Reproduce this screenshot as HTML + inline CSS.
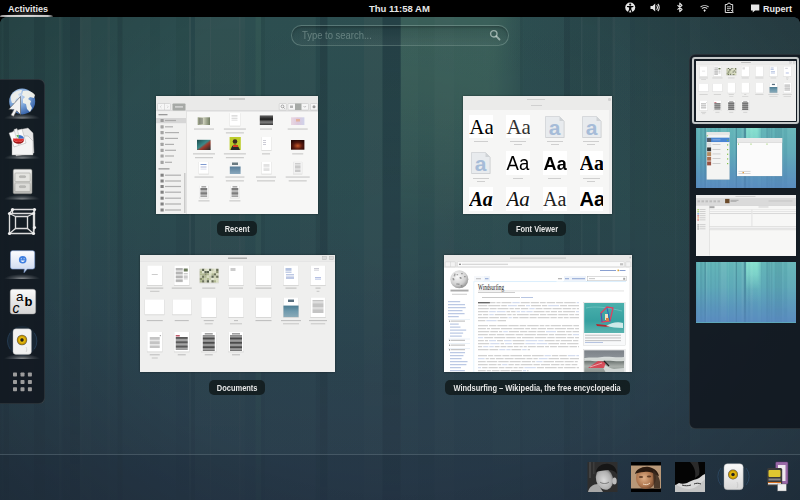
<!DOCTYPE html>
<html><head><meta charset="utf-8">
<style>
*{margin:0;padding:0;box-sizing:border-box}
html,body{width:800px;height:500px;overflow:hidden;background:#000;font-family:"Liberation Sans",sans-serif}
#stage{position:absolute;left:0;top:0;width:800px;height:500px;overflow:hidden}
.abs{position:absolute}
#panel{position:absolute;left:0;top:0;width:800px;height:17px;background:#000;color:#e8e8e8;font-size:9px;font-weight:bold;line-height:10px}
.win{position:absolute;background:#f4f4f3;box-shadow:0 0 2px rgba(0,0,0,.45);overflow:hidden}
.lbl{position:absolute;height:15px;border-radius:5px;background:rgba(16,24,26,.82);color:#e6e6e6;font-size:8.5px;font-weight:bold;text-align:center;line-height:15px;white-space:nowrap}
.lbl{display:flex;justify-content:center}
.lbl span{display:block;margin-top:1px;transform:scaleX(.88);transform-origin:50% 50%}
#dock{position:absolute;left:0;top:79px;width:44.5px;height:325px;background:rgba(17,23,31,.87);border-radius:0 6px 6px 0;box-shadow:inset -1px 0 0 rgba(140,150,150,.18),inset 0 1px 0 rgba(140,150,150,.18),inset 0 -1px 0 rgba(140,150,150,.18)}
#ws{position:absolute;left:688.6px;top:54px;width:120px;height:375px;background:rgba(17,23,31,.88);border-radius:6px 0 0 6px;box-shadow:inset 1px 0 0 rgba(140,150,150,.18),inset 0 1px 0 rgba(140,150,150,.18),inset 0 -1px 0 rgba(140,150,150,.18)}
.wst{position:absolute;left:695.7px;width:100px;height:60.5px;overflow:hidden}
#tray{position:absolute;left:0;top:454px;width:800px;height:46px;background:rgba(15,25,45,.18);border-top:1px solid rgba(120,140,150,.38)}
</style></head><body>
<div id="stage">
<svg width="0" height="0" style="position:absolute">
<defs>
<linearGradient id="wpv" x1="0" y1="0" x2="0" y2="1">
 <stop offset="0" stop-color="#64b6b8"/><stop offset=".4" stop-color="#5eaab8"/><stop offset=".75" stop-color="#5a96bc"/><stop offset="1" stop-color="#5a8cc0"/>
</linearGradient>
<linearGradient id="wpfade" x1="0" y1="0" x2="0" y2="1">
 <stop offset="0" stop-color="#fff"/><stop offset=".5" stop-color="#fff" stop-opacity=".75"/><stop offset="1" stop-color="#fff" stop-opacity=".28"/>
</linearGradient>
<linearGradient id="wpglow" x1="0" y1="0" x2="0" y2="1">
 <stop offset="0" stop-color="#a0ffe0" stop-opacity=".6"/><stop offset=".2" stop-color="#a0ffe0" stop-opacity=".45"/><stop offset=".45" stop-color="#a0ffe0" stop-opacity=".08"/><stop offset=".7" stop-color="#a0ffe0" stop-opacity="0"/>
</linearGradient>
<linearGradient id="wpglowx" x1="0" y1="0" x2="1" y2="0">
 <stop offset="0" stop-color="#fff" stop-opacity=".9"/><stop offset=".7" stop-color="#fff" stop-opacity="1"/><stop offset="1" stop-color="#fff" stop-opacity="0"/>
</linearGradient>
<mask id="wpm" maskContentUnits="userSpaceOnUse"><rect width="800" height="500" fill="url(#wpfade)"/></mask>
<mask id="wpgm" maskContentUnits="userSpaceOnUse"><rect x="400.6" width="125" height="500" fill="url(#wpglowx)"/></mask>
<symbol id="wp" viewBox="0 0 800 500" preserveAspectRatio="none">
 <rect width="800" height="500" fill="url(#wpv)"/>
 <g mask="url(#wpm)"><rect x="0" y="0" width="1.5" height="500" fill="#103050" fill-opacity="0.1"/><rect x="3.5" y="0" width="5.5" height="500" fill="#103050" fill-opacity="0.14"/><rect x="34" y="0" width="11.0" height="500" fill="#103050" fill-opacity="0.14"/><rect x="45" y="0" width="14.0" height="500" fill="#103050" fill-opacity="0.05"/><rect x="59" y="0" width="2.0" height="500" fill="#ffffff" fill-opacity="0.08"/><rect x="62.5" y="0" width="7.5" height="500" fill="#103050" fill-opacity="0.12"/><rect x="70" y="0" width="10.0" height="500" fill="#103050" fill-opacity="0.22"/><rect x="80" y="0" width="2.5" height="500" fill="#ffffff" fill-opacity="0.12"/><rect x="82.5" y="0" width="8.5" height="500" fill="#ffffff" fill-opacity="0.08"/><rect x="107.5" y="0" width="2.5" height="500" fill="#ffffff" fill-opacity="0.08"/><rect x="117.5" y="0" width="5.0" height="500" fill="#103050" fill-opacity="0.16"/><rect x="150" y="0" width="10.0" height="500" fill="#103050" fill-opacity="0.05"/><rect x="176" y="0" width="13.0" height="500" fill="#103050" fill-opacity="0.07"/><rect x="189" y="0" width="2.0" height="500" fill="#ffffff" fill-opacity="0.12"/><rect x="191" y="0" width="4.0" height="500" fill="#103050" fill-opacity="0.13"/><rect x="195" y="0" width="50.0" height="500" fill="#ffffff" fill-opacity="0.07"/><rect x="210" y="0" width="1.0" height="500" fill="#ffffff" fill-opacity="0.1"/><rect x="239" y="0" width="1.5" height="500" fill="#ffffff" fill-opacity="0.1"/><rect x="255.6" y="0" width="5.4" height="500" fill="#a0ffe0" fill-opacity="0.22"/><rect x="261" y="0" width="4.0" height="500" fill="#103050" fill-opacity="0.08"/><rect x="300" y="0" width="15.0" height="500" fill="#ffffff" fill-opacity="0.05"/><rect x="316" y="0" width="4.0" height="500" fill="#103050" fill-opacity="0.12"/><rect x="320" y="0" width="7.5" height="500" fill="#103050" fill-opacity="0.25"/><rect x="364" y="0" width="18.5" height="500" fill="#ffffff" fill-opacity="0.09"/><rect x="382.5" y="0" width="18.1" height="500" fill="#103050" fill-opacity="0.26"/><rect x="400.6" y="0" width="17.4" height="500" fill="#ffffff" fill-opacity="0.03"/><rect x="418" y="0" width="16.5" height="500" fill="#103050" fill-opacity="0.05"/><rect x="434.5" y="0" width="19.5" height="500" fill="#ffffff" fill-opacity="0.08"/><rect x="492.5" y="0" width="27.5" height="500" fill="#a0ffe0" fill-opacity="0.08"/><rect x="520" y="0" width="2.5" height="500" fill="#103050" fill-opacity="0.08"/><rect x="564" y="0" width="6.0" height="500" fill="#103050" fill-opacity="0.2"/><rect x="570" y="0" width="11.0" height="500" fill="#103050" fill-opacity="0.1"/><rect x="581" y="0" width="1.5" height="500" fill="#ffffff" fill-opacity="0.1"/><rect x="582.5" y="0" width="15.0" height="500" fill="#103050" fill-opacity="0.08"/><rect x="597.5" y="0" width="2.5" height="500" fill="#ffffff" fill-opacity="0.12"/><rect x="600" y="0" width="12.5" height="500" fill="#103050" fill-opacity="0.1"/><rect x="612.5" y="0" width="2.5" height="500" fill="#ffffff" fill-opacity="0.1"/><rect x="630" y="0" width="5.0" height="500" fill="#103050" fill-opacity="0.12"/><rect x="635" y="0" width="55.0" height="500" fill="#103050" fill-opacity="0.1"/><rect x="648" y="0" width="1.5" height="500" fill="#ffffff" fill-opacity="0.08"/><rect x="675" y="0" width="1.5" height="500" fill="#ffffff" fill-opacity="0.08"/><rect x="690" y="0" width="10.0" height="500" fill="#ffffff" fill-opacity="0.05"/><rect x="700" y="0" width="30.0" height="500" fill="#103050" fill-opacity="0.06"/><rect x="730" y="0" width="70.0" height="500" fill="#ffffff" fill-opacity="0.04"/></g>
 <rect x="400.6" width="125" height="500" fill="url(#wpglow)" mask="url(#wpgm)"/>
</symbol>
</defs></svg>
<svg class="abs" style="left:0;top:0" width="800" height="500" viewBox="0 0 800 500">
 <defs>
  <radialGradient id="rdesat" cx="800" cy="0" r="300" gradientUnits="userSpaceOnUse" gradientTransform="translate(800 0) scale(1 .9) translate(-800 0)"><stop offset="0" stop-color="#2a3c48" stop-opacity=".55"/><stop offset=".5" stop-color="#2a3c48" stop-opacity=".3"/><stop offset="1" stop-color="#2a3c48" stop-opacity="0"/></radialGradient>
  <linearGradient id="btint" x1="0" y1="0" x2="0" y2="1"><stop offset="0" stop-color="#3c3c1e" stop-opacity="0"/><stop offset=".5" stop-color="#3c3c1e" stop-opacity=".05"/><stop offset="1" stop-color="#3c3c1e" stop-opacity=".12"/></linearGradient>
  <radialGradient id="vig" cx="400" cy="230" r="520" gradientUnits="userSpaceOnUse" gradientTransform="translate(400 230) scale(1 .8) translate(-400 -230)">
   <stop offset="0" stop-color="#000" stop-opacity="0"/><stop offset=".6" stop-color="#000" stop-opacity=".04"/><stop offset="1" stop-color="#000" stop-opacity=".22"/>
  </radialGradient>
 </defs>
 <use href="#wp" x="0" y="0" width="800" height="500"/>
 <rect width="800" height="500" fill="#000" fill-opacity=".545"/>
 <rect width="800" height="500" fill="#505050" fill-opacity=".05"/>
 <rect x="0" width="800" height="500" fill="url(#rdesat)"/>
 <rect width="800" height="500" fill="url(#btint)"/>
 <rect width="800" height="500" fill="url(#vig)"/>
</svg>

<div id="panel">
 <div class="abs" style="left:8px;top:4px">Activities</div>
 <div class="abs" style="left:0;top:15.2px;width:53px;height:1.8px;background:linear-gradient(90deg,rgba(200,200,200,.7),#c8c8c8 15%,#d0d0d0 50%,#c0c0c0 90%,rgba(200,200,200,.3));border-radius:2px 2px 0 0"></div>
 <div class="abs" style="left:5px;top:10px;width:46px;height:6px;background:radial-gradient(ellipse at 50% 100%,rgba(255,255,255,.25),rgba(255,255,255,0) 70%)"></div>
 <div class="abs" style="left:369px;top:4px;font-size:9.5px">Thu 11:58 AM</div>
 <div class="abs" style="left:763px;top:4px">Rupert</div>
 <svg class="abs" style="left:0;top:0" width="800" height="17" viewBox="0 0 800 17">
<circle cx="630.2" cy="7.5" r="5" fill="#e6e6e6"/>
<g fill="#000"><circle cx="630.2" cy="4.6" r="1.05"/><path d="M627 6h6.4v1.1l-2.1.5v1.6l1.3 3h-1.2l-1.2-2.5-1.2 2.5h-1.2l1.3-3v-1.6l-2.1-.5z"/></g>
<path d="M650.5 6h2l2.7-2.5v8l-2.7-2.5h-2z" fill="#e6e6e6"/>
<path d="M656.5 5.3a3 3 0 0 1 0 4.4M657.8 4a5 5 0 0 1 0 7" fill="none" stroke="#e6e6e6" stroke-width="1.1"/>
<path d="M677.5 5.2l4.5 4.3-2.2 2.2v-8.6l2.2 2.2-4.5 4.3" fill="none" stroke="#e6e6e6" stroke-width="1.1" stroke-linejoin="round"/>
<path d="M700.6 7a6 6 0 0 1 8 0" fill="none" stroke="#c8c8c8" stroke-width="1.1"/>
<path d="M702 8.6a4 4 0 0 1 5.2 0" fill="none" stroke="#d8d8d8" stroke-width="1.1"/>
<path d="M703.4 10.2l1.2-0.9 1.2.9-1.2 1.8z" fill="#e6e6e6"/>
<path d="M725.3 4.5h2l.7-1.3h2l.7 1.3h2v8h-7.4z" fill="none" stroke="#e0e0e0" stroke-width="1"/>
<path d="M727 6.8h4M727 8.6h4M727 10.4h2.5" stroke="#e0e0e0" stroke-width=".8"/>
<path d="M731 10l2.5 2.5" stroke="#bbb" stroke-width="1"/>
<path d="M751 4.5h8.3v6h-4.2l-2.4 2.1v-2.1h-1.7z" fill="#e6e6e6"/>
</svg>

</div>
<!-- screen corners -->
<div class="abs" style="left:0;top:17px;width:6px;height:6px;background:radial-gradient(circle at 6px 6px,transparent 5.5px,#000 6px)"></div>
<div class="abs" style="left:794px;top:17px;width:6px;height:6px;background:radial-gradient(circle at 0 6px,transparent 5.5px,#000 6px)"></div>

<!-- search -->
<div class="abs" style="left:291px;top:25px;width:218px;height:21px;border-radius:11px;border:1.5px solid rgba(175,205,195,.30);background:linear-gradient(180deg,rgba(0,0,0,.08),rgba(255,255,255,.04));box-shadow:inset 0 1.5px 2px rgba(0,0,0,.2);color:rgba(200,222,214,.36);font-size:10.5px;line-height:19px;padding-left:10px"><span style="display:inline-block;transform:scaleX(.9);transform-origin:0 50%">Type to search...</span></div>
<svg class="abs" style="left:489px;top:29px" width="12" height="12" viewBox="0 0 12 12"><circle cx="4.8" cy="4.8" r="3.2" fill="none" stroke="rgba(215,228,222,.6)" stroke-width="1.4"/><path d="M7.2 7.2L10.5 10.5" stroke="rgba(215,228,222,.6)" stroke-width="1.8" stroke-linecap="round"/></svg>

<!-- windows -->
<div class="win" id="w1" style="left:156px;top:96px;width:162px;height:118px"><svg class="abs" style="left:0;top:0" width="162" height="118" viewBox="156 96 162 118"><defs><linearGradient id="g1a" x1="0" x2="1"><stop offset="0" stop-color="#8f977c"/><stop offset=".45" stop-color="#cfd2bd"/><stop offset="1" stop-color="#6f7a60"/></linearGradient>
<linearGradient id="g1b" x1="0" x2="0" y1="0" y2="1"><stop offset="0" stop-color="#666"/><stop offset=".4" stop-color="#1e1e1e"/><stop offset=".7" stop-color="#808080"/><stop offset="1" stop-color="#3a3a3a"/></linearGradient>
<linearGradient id="g1c" x1="0" x2="1"><stop offset="0" stop-color="#ead8e2"/><stop offset=".5" stop-color="#dcc8dc"/><stop offset="1" stop-color="#cfd3ea"/></linearGradient>
<linearGradient id="g1d" x1="0" x2="1" y1="0" y2="1"><stop offset="0" stop-color="#1d4a4a"/><stop offset=".45" stop-color="#3b8a8a"/><stop offset=".6" stop-color="#a03a2a"/><stop offset="1" stop-color="#1a2a2a"/></linearGradient>
<radialGradient id="g1e" cx=".5" cy=".6" r=".6"><stop offset="0" stop-color="#c8582a"/><stop offset=".55" stop-color="#5a1a10"/><stop offset="1" stop-color="#2a0a08"/></radialGradient>
<linearGradient id="g1f" x1="0" x2="0" y1="0" y2="1"><stop offset="0" stop-color="#f4f4f4"/><stop offset=".35" stop-color="#f4f4f4"/><stop offset=".4" stop-color="#5a7f9a"/><stop offset="1" stop-color="#8aa8bd"/></linearGradient></defs><rect x="156.00" y="96.00" width="162.00" height="118.00" fill="#f7f7f6"/><rect x="156.00" y="96.00" width="162.00" height="15.00" fill="#eaeae9"/><rect x="156.00" y="110.60" width="162.00" height="0.70" fill="#c8c8c7"/><rect x="229.00" y="98.40" width="16.00" height="1.20" fill="#b8b8b8"/><rect x="157.50" y="103.50" width="13.00" height="6.50" fill="#f6f6f6" stroke="#c0c0c0" stroke-width="0.5" rx="0.8"/><rect x="164.00" y="103.50" width="0.50" height="6.50" fill="#c4c4c4"/><path d="M161.5 105.5l-1.3 1.3 1.3 1.3M167 105.5l1.3 1.3-1.3 1.3" fill="none" stroke="#bbb" stroke-width=".5"/><rect x="172.50" y="103.50" width="13.00" height="7.00" fill="#a6a9a6" rx="0.8"/><rect x="175.00" y="106.30" width="8.00" height="1.20" fill="#e2e2e2"/><rect x="279.20" y="103.50" width="7.20" height="6.50" fill="#f6f6f6" stroke="#c0c0c0" stroke-width="0.5" rx="0.8"/><circle cx="282.5" cy="106.4" r="1.4" fill="none" stroke="#777" stroke-width=".6"/><path d="M283.5 107.4l1.2 1.2" stroke="#777" stroke-width=".7"/><rect x="288.00" y="103.50" width="20.50" height="6.50" fill="#f6f6f6" stroke="#c0c0c0" stroke-width="0.5" rx="0.8"/><rect x="295.00" y="103.50" width="6.50" height="6.50" fill="#a6a9a6"/><rect x="290.00" y="105.50" width="3.00" height="2.50" fill="#999" fill-opacity="0.7"/><path d="M303.5 106l1.3 1.3 1.3-1.3" fill="none" stroke="#888" stroke-width=".5"/><rect x="310.40" y="103.50" width="7.20" height="6.50" fill="#f6f6f6" stroke="#c0c0c0" stroke-width="0.5" rx="0.8"/><circle cx="314" cy="106.7" r="1.5" fill="#999"/><rect x="156.00" y="111.30" width="30.00" height="102.70" fill="#f1f1f0"/><rect x="186.00" y="111.30" width="0.60" height="102.70" fill="#d6d6d6"/><rect x="184.20" y="173.00" width="1.20" height="40.00" fill="#c0c0c0"/><rect x="158.50" y="114.00" width="9.00" height="1.30" fill="#9a9a9a"/><rect x="156.00" y="118.00" width="30.00" height="5.20" fill="#d6d6d6"/><rect x="160.50" y="118.90" width="3.20" height="3.20" fill="#8a8a8a" fill-opacity="0.75" rx="0.4"/><rect x="165.00" y="119.90" width="11.00" height="1.20" fill="#a0a0a0" fill-opacity="0.8"/><rect x="160.50" y="125.20" width="3.20" height="3.20" fill="#8a8a8a" fill-opacity="0.75" rx="0.4"/><rect x="165.00" y="126.20" width="8.00" height="1.20" fill="#a0a0a0" fill-opacity="0.8"/><rect x="160.50" y="131.00" width="3.20" height="3.20" fill="#8a8a8a" fill-opacity="0.75" rx="0.4"/><rect x="165.00" y="132.00" width="14.00" height="1.20" fill="#a0a0a0" fill-opacity="0.8"/><rect x="160.50" y="136.80" width="3.20" height="3.20" fill="#8a8a8a" fill-opacity="0.75" rx="0.4"/><rect x="165.00" y="137.80" width="13.00" height="1.20" fill="#a0a0a0" fill-opacity="0.8"/><rect x="160.50" y="142.80" width="3.20" height="3.20" fill="#8a8a8a" fill-opacity="0.75" rx="0.4"/><rect x="165.00" y="143.80" width="9.00" height="1.20" fill="#a0a0a0" fill-opacity="0.8"/><rect x="160.50" y="148.70" width="3.20" height="3.20" fill="#8a8a8a" fill-opacity="0.75" rx="0.4"/><rect x="165.00" y="149.70" width="11.00" height="1.20" fill="#a0a0a0" fill-opacity="0.8"/><rect x="160.50" y="154.40" width="3.20" height="3.20" fill="#8a8a8a" fill-opacity="0.75" rx="0.4"/><rect x="165.00" y="155.40" width="9.00" height="1.20" fill="#a0a0a0" fill-opacity="0.8"/><rect x="160.50" y="160.70" width="3.20" height="3.20" fill="#8a8a8a" fill-opacity="0.75" rx="0.4"/><rect x="165.00" y="161.70" width="7.00" height="1.20" fill="#a0a0a0" fill-opacity="0.8"/><rect x="158.50" y="168.20" width="11.00" height="1.30" fill="#9a9a9a"/><rect x="160.50" y="173.70" width="3.20" height="3.00" fill="#666" fill-opacity="0.8"/><rect x="165.00" y="174.60" width="16.00" height="1.20" fill="#a0a0a0" fill-opacity="0.8"/><rect x="160.50" y="179.50" width="3.20" height="3.00" fill="#666" fill-opacity="0.8"/><rect x="165.00" y="180.40" width="16.00" height="1.20" fill="#a0a0a0" fill-opacity="0.8"/><rect x="160.50" y="185.00" width="3.20" height="3.00" fill="#666" fill-opacity="0.8"/><rect x="165.00" y="185.90" width="16.00" height="1.20" fill="#a0a0a0" fill-opacity="0.8"/><rect x="160.50" y="190.70" width="3.20" height="3.00" fill="#666" fill-opacity="0.8"/><rect x="165.00" y="191.60" width="16.00" height="1.20" fill="#a0a0a0" fill-opacity="0.8"/><rect x="160.50" y="196.70" width="3.20" height="3.00" fill="#666" fill-opacity="0.8"/><rect x="165.00" y="197.60" width="16.00" height="1.20" fill="#a0a0a0" fill-opacity="0.8"/><rect x="160.50" y="202.50" width="3.20" height="3.00" fill="#666" fill-opacity="0.8"/><rect x="165.00" y="203.40" width="16.00" height="1.20" fill="#a0a0a0" fill-opacity="0.8"/><rect x="160.50" y="208.50" width="3.20" height="3.00" fill="#666" fill-opacity="0.8"/><rect x="165.00" y="209.40" width="16.00" height="1.20" fill="#a0a0a0" fill-opacity="0.8"/><rect x="197.70" y="117.30" width="12.30" height="7.70" fill="url(#g1a)"/><rect x="199.00" y="118.00" width="4.00" height="6.00" fill="#555" fill-opacity="0.35"/><rect x="229.70" y="113.20" width="10.60" height="13.30" fill="#000" fill-opacity="0.12"/><rect x="230.00" y="113.00" width="10.00" height="12.70" fill="#fff"/><rect x="231.50" y="115.00" width="6.00" height="0.60" fill="#c8c8c8"/><rect x="231.50" y="116.60" width="6.00" height="0.60" fill="#c8c8c8"/><rect x="231.50" y="118.20" width="6.00" height="0.60" fill="#c8c8c8"/><rect x="231.50" y="119.80" width="6.00" height="0.60" fill="#c8c8c8"/><rect x="259.80" y="115.40" width="13.20" height="9.60" fill="url(#g1b)"/><rect x="291.00" y="117.30" width="13.40" height="7.70" fill="url(#g1c)"/><rect x="296.00" y="119.00" width="4.00" height="2.50" fill="#e8a070" fill-opacity="0.6"/><rect x="197.00" y="139.80" width="13.60" height="10.20" fill="url(#g1d)"/><rect x="229.60" y="137.00" width="11.20" height="13.00" fill="#bccc2c"/><circle cx="235" cy="141.5" r="2.3" fill="#3a2a20"/><path d="M230.5 150c1-4 3-5.5 4.5-5.5s3.5 1.5 5 5.5z" fill="#2a2a2a"/><rect x="233" y="145" width="5" height="2" fill="#d84020"/><rect x="261.40" y="137.20" width="10.20" height="13.60" fill="#000" fill-opacity="0.12"/><rect x="261.70" y="137.00" width="9.60" height="13.00" fill="#fff"/><rect x="263.00" y="140.00" width="3.00" height="0.60" fill="#aab"/><rect x="263.00" y="142.00" width="3.00" height="0.60" fill="#aab"/><rect x="263.00" y="144.00" width="3.00" height="0.60" fill="#aab"/><rect x="291.00" y="140.00" width="13.40" height="9.70" fill="url(#g1e)"/><rect x="198.70" y="161.90" width="10.10" height="12.60" fill="#000" fill-opacity="0.12"/><rect x="199.00" y="161.70" width="9.50" height="12.00" fill="#fff"/><rect x="200.50" y="164.00" width="6.00" height="1.00" fill="#7f9ad0"/><rect x="200.50" y="166.00" width="6.00" height="0.50" fill="#b0b8d8"/><rect x="200.50" y="167.40" width="6.00" height="0.50" fill="#b0b8d8"/><rect x="200.50" y="168.80" width="6.00" height="0.50" fill="#b0b8d8"/><rect x="229.8" y="162" width="10.8" height="12" fill="url(#g1f)"/><rect x="232.00" y="162.50" width="6.00" height="2.50" fill="#6a7a80"/><rect x="261.40" y="161.90" width="10.20" height="12.60" fill="#000" fill-opacity="0.12"/><rect x="261.70" y="161.70" width="9.60" height="12.00" fill="#fff"/><rect x="263.50" y="164.00" width="6.00" height="0.50" fill="#c4c4c4"/><rect x="263.50" y="165.30" width="6.00" height="0.50" fill="#c4c4c4"/><rect x="263.50" y="166.60" width="6.00" height="0.50" fill="#c4c4c4"/><rect x="263.50" y="167.90" width="6.00" height="0.50" fill="#c4c4c4"/><rect x="263.50" y="169.20" width="6.00" height="0.50" fill="#c4c4c4"/><rect x="263.50" y="170.50" width="6.00" height="0.50" fill="#c4c4c4"/><rect x="293.10" y="161.90" width="9.20" height="12.60" fill="#000" fill-opacity="0.12"/><rect x="293.40" y="161.70" width="8.60" height="12.00" fill="#f2f2f2"/><rect x="295.00" y="163.50" width="5.50" height="0.55" fill="#a8a8a8"/><rect x="295.00" y="164.80" width="5.50" height="0.55" fill="#a8a8a8"/><rect x="295.00" y="166.10" width="5.50" height="0.55" fill="#a8a8a8"/><rect x="295.00" y="167.40" width="5.50" height="0.55" fill="#a8a8a8"/><rect x="295.00" y="168.70" width="5.50" height="0.55" fill="#a8a8a8"/><rect x="295.00" y="170.00" width="5.50" height="0.55" fill="#a8a8a8"/><rect x="295.00" y="171.30" width="5.50" height="0.55" fill="#a8a8a8"/><rect x="199.10" y="185.80" width="9.40" height="12.60" fill="#000" fill-opacity="0.12"/><rect x="199.40" y="185.60" width="8.80" height="12.00" fill="#fff"/><rect x="201.40" y="186.50" width="4.80" height="0.80" fill="#555"/><rect x="200.40" y="188.00" width="6.80" height="0.70" fill="#444"/><rect x="200.40" y="189.30" width="6.80" height="0.70" fill="#444"/><rect x="200.40" y="190.60" width="6.80" height="0.70" fill="#444"/><rect x="200.40" y="191.90" width="6.80" height="0.70" fill="#444"/><rect x="200.40" y="193.20" width="6.80" height="0.70" fill="#444"/><rect x="200.40" y="194.50" width="6.80" height="0.70" fill="#444"/><rect x="200.40" y="195.80" width="6.80" height="0.70" fill="#444"/><rect x="230.20" y="185.80" width="9.40" height="12.60" fill="#000" fill-opacity="0.12"/><rect x="230.50" y="185.60" width="8.80" height="12.00" fill="#fff"/><rect x="232.50" y="186.50" width="4.80" height="0.80" fill="#555"/><rect x="231.50" y="188.00" width="6.80" height="0.70" fill="#444"/><rect x="231.50" y="189.30" width="6.80" height="0.70" fill="#444"/><rect x="231.50" y="190.60" width="6.80" height="0.70" fill="#444"/><rect x="231.50" y="191.90" width="6.80" height="0.70" fill="#444"/><rect x="231.50" y="193.20" width="6.80" height="0.70" fill="#444"/><rect x="231.50" y="194.50" width="6.80" height="0.70" fill="#444"/><rect x="231.50" y="195.80" width="6.80" height="0.70" fill="#444"/><rect x="194.00" y="128.50" width="20.00" height="1.10" fill="#9a9a9a" fill-opacity="0.5"/><rect x="223.90" y="128.50" width="22.00" height="1.10" fill="#9a9a9a" fill-opacity="0.5"/><rect x="225.90" y="132.30" width="18.00" height="1.10" fill="#9a9a9a" fill-opacity="0.5"/><rect x="260.00" y="128.50" width="12.00" height="1.10" fill="#9a9a9a" fill-opacity="0.5"/><rect x="287.70" y="128.50" width="20.00" height="1.10" fill="#9a9a9a" fill-opacity="0.5"/><rect x="193.00" y="153.30" width="22.00" height="1.10" fill="#9a9a9a" fill-opacity="0.5"/><rect x="195.00" y="157.10" width="18.00" height="1.10" fill="#9a9a9a" fill-opacity="0.5"/><rect x="223.90" y="153.30" width="22.00" height="1.10" fill="#9a9a9a" fill-opacity="0.5"/><rect x="225.90" y="157.10" width="18.00" height="1.10" fill="#9a9a9a" fill-opacity="0.5"/><rect x="262.00" y="153.30" width="8.00" height="1.10" fill="#9a9a9a" fill-opacity="0.5"/><rect x="292.20" y="153.30" width="11.00" height="1.10" fill="#9a9a9a" fill-opacity="0.5"/><rect x="194.50" y="176.50" width="19.00" height="1.10" fill="#9a9a9a" fill-opacity="0.5"/><rect x="225.40" y="176.50" width="19.00" height="1.10" fill="#9a9a9a" fill-opacity="0.5"/><rect x="225.90" y="180.30" width="18.00" height="1.10" fill="#9a9a9a" fill-opacity="0.5"/><rect x="256.00" y="176.50" width="20.00" height="1.10" fill="#9a9a9a" fill-opacity="0.5"/><rect x="257.00" y="180.30" width="18.00" height="1.10" fill="#9a9a9a" fill-opacity="0.5"/><rect x="285.70" y="176.50" width="24.00" height="1.10" fill="#9a9a9a" fill-opacity="0.5"/><rect x="288.70" y="180.30" width="18.00" height="1.10" fill="#9a9a9a" fill-opacity="0.5"/><rect x="198.50" y="200.30" width="11.00" height="1.10" fill="#9a9a9a" fill-opacity="0.5"/><rect x="229.40" y="200.30" width="11.00" height="1.10" fill="#9a9a9a" fill-opacity="0.5"/></svg></div>
<div class="lbl" style="left:217px;top:221px;width:40px"><span>Recent</span></div>
<div class="win" id="w2" style="left:463px;top:96px;width:149px;height:118px"><div class="abs" style="left:0.0px;top:0.0px;width:149.0px;height:13.5px;background:#ebebea;"></div><div class="abs" style="left:0.0px;top:13.5px;width:149.0px;height:0.7px;background:#d2d2d2;"></div><div class="abs" style="left:64.0px;top:2.5px;width:18.0px;height:1.0px;background:#d0d0d0;"></div><div class="abs" style="left:68.0px;top:8.5px;width:11.0px;height:1.0px;background:#d0d0d0;"></div><div class="abs" style="left:145.0px;top:2.0px;width:2.5px;height:2.5px;background:#d0d0d0;border-radius:50%"></div><div class="abs" style="left:0.0px;top:14.0px;width:149.0px;height:108.0px;background:#f6f6f5;"></div><div class="abs" style="left:146.3px;top:14.0px;width:2.7px;height:104.0px;background:#ececec;"></div><div class="abs" style="left:6.3px;top:18.5px;width:23.5px;height:23.5px;background:#fff;overflow:hidden;text-align:center;white-space:nowrap;font-family:'Liberation Serif';font-weight:normal;font-style:normal;font-size:21px;line-height:25px;color:#000"><span style="display:inline-block;transform:scaleX(1)">Aa</span></div><div class="abs" style="left:43.4px;top:18.5px;width:23.5px;height:23.5px;background:#fff;overflow:hidden;text-align:center;white-space:nowrap;font-family:'Liberation Serif';font-weight:normal;font-style:normal;font-size:21px;line-height:25px;color:#333"><span style="display:inline-block;transform:scaleX(1)">Aa</span></div><svg class="abs" style="left:80.0px;top:17.5px" width="24" height="25" viewBox="0 0 24 25"><path d="M2.5 2.5h14l4.5 4.5v16.5h-18.5z" fill="#000" fill-opacity=".12" transform="translate(.4 .6)"/><path d="M2.5 2.5h14l4.5 4.5v16.5h-18.5z" fill="#e8ebee" stroke="#c6cace" stroke-width=".6"/><path d="M16.5 2.5v4.5h4.5" fill="#cfd3d6"/><text x="11.5" y="20.5" text-anchor="middle" font-family="Liberation Sans" font-size="21" fill="#a6bcd8" font-weight="bold">a</text></svg><svg class="abs" style="left:116.6px;top:17.5px" width="24" height="25" viewBox="0 0 24 25"><path d="M2.5 2.5h14l4.5 4.5v16.5h-18.5z" fill="#000" fill-opacity=".12" transform="translate(.4 .6)"/><path d="M2.5 2.5h14l4.5 4.5v16.5h-18.5z" fill="#e8ebee" stroke="#c6cace" stroke-width=".6"/><path d="M16.5 2.5v4.5h4.5" fill="#cfd3d6"/><text x="11.5" y="20.5" text-anchor="middle" font-family="Liberation Sans" font-size="21" fill="#a6bcd8" font-weight="bold">a</text></svg><svg class="abs" style="left:6.3px;top:54.2px" width="24" height="25" viewBox="0 0 24 25"><path d="M2.5 2.5h14l4.5 4.5v16.5h-18.5z" fill="#000" fill-opacity=".12" transform="translate(.4 .6)"/><path d="M2.5 2.5h14l4.5 4.5v16.5h-18.5z" fill="#e8ebee" stroke="#c6cace" stroke-width=".6"/><path d="M16.5 2.5v4.5h4.5" fill="#cfd3d6"/><text x="11.5" y="20.5" text-anchor="middle" font-family="Liberation Sans" font-size="21" fill="#a6bcd8" font-weight="bold">a</text></svg><div class="abs" style="left:43.4px;top:55.2px;width:23.5px;height:23.5px;background:#fff;overflow:hidden;text-align:center;white-space:nowrap;font-family:'Liberation Sans';font-weight:normal;font-style:normal;font-size:19.5px;line-height:25px;color:#000"><span style="display:inline-block;transform:scaleX(0.95)">Aa</span></div><div class="abs" style="left:80.0px;top:55.2px;width:23.5px;height:23.5px;background:#fff;overflow:hidden;text-align:center;white-space:nowrap;font-family:'Liberation Sans';font-weight:bold;font-style:normal;font-size:19px;line-height:25px;color:#000"><span style="display:inline-block;transform:scaleX(0.95)">Aa</span></div><div class="abs" style="left:116.6px;top:55.2px;width:23.5px;height:23.5px;background:#fff;overflow:hidden;text-align:center;white-space:nowrap;font-family:'Liberation Serif';font-weight:bold;font-style:normal;font-size:20px;line-height:24px;color:#000"><span style="display:inline-block;transform:scaleX(1)">Aa</span></div><div class="abs" style="left:6.3px;top:91.2px;width:23.5px;height:23.5px;background:#fff;overflow:hidden;text-align:center;white-space:nowrap;font-family:'Liberation Serif';font-weight:bold;font-style:italic;font-size:20px;line-height:25px;color:#000"><span style="display:inline-block;transform:scaleX(1)">Aa</span></div><div class="abs" style="left:43.4px;top:91.2px;width:23.5px;height:23.5px;background:#fff;overflow:hidden;text-align:center;white-space:nowrap;font-family:'Liberation Serif';font-weight:normal;font-style:italic;font-size:21px;line-height:25px;color:#111"><span style="display:inline-block;transform:scaleX(1)">Aa</span></div><div class="abs" style="left:80.0px;top:91.2px;width:23.5px;height:23.5px;background:#fff;overflow:hidden;text-align:center;white-space:nowrap;font-family:'Liberation Serif';font-weight:normal;font-style:normal;font-size:20px;line-height:25px;color:#222"><span style="display:inline-block;transform:scaleX(1)">Aa</span></div><div class="abs" style="left:116.6px;top:91.2px;width:23.5px;height:23.5px;background:#fff;overflow:hidden;text-align:center;white-space:nowrap;font-family:'Liberation Sans';font-weight:bold;font-style:normal;font-size:20px;line-height:25px;color:#000"><span style="display:inline-block;transform:scaleX(1)">Aa</span></div><div class="abs" style="left:11.1px;top:45.0px;width:14.0px;height:1.0px;background:#cfcfcf;"></div><div class="abs" style="left:47.1px;top:45.0px;width:16.0px;height:1.0px;background:#cfcfcf;"></div><div class="abs" style="left:51.1px;top:48.2px;width:8.0px;height:1.0px;background:#cfcfcf;"></div><div class="abs" style="left:83.8px;top:45.0px;width:16.0px;height:1.0px;background:#cfcfcf;"></div><div class="abs" style="left:87.8px;top:48.2px;width:8.0px;height:1.0px;background:#cfcfcf;"></div><div class="abs" style="left:120.4px;top:45.0px;width:16.0px;height:1.0px;background:#cfcfcf;"></div><div class="abs" style="left:124.4px;top:48.2px;width:8.0px;height:1.0px;background:#cfcfcf;"></div><div class="abs" style="left:10.1px;top:81.7px;width:16.0px;height:1.0px;background:#cfcfcf;"></div><div class="abs" style="left:14.1px;top:84.9px;width:8.0px;height:1.0px;background:#cfcfcf;"></div><div class="abs" style="left:50.1px;top:81.7px;width:10.0px;height:1.0px;background:#cfcfcf;"></div><div class="abs" style="left:85.2px;top:81.7px;width:13.0px;height:1.0px;background:#cfcfcf;"></div><div class="abs" style="left:119.9px;top:81.7px;width:17.0px;height:1.0px;background:#cfcfcf;"></div><div class="abs" style="left:124.4px;top:84.9px;width:8.0px;height:1.0px;background:#cfcfcf;"></div></div>
<div class="lbl" style="left:508px;top:221px;width:58px"><span>Font Viewer</span></div>
<div class="win" id="w3" style="left:140px;top:255px;width:195px;height:117px"><svg class="abs" style="left:0;top:0" width="195" height="118" viewBox="140 255 195 118"><defs><linearGradient id="g3a" x1="0" x2="0" y1="0" y2="1"><stop offset="0" stop-color="#fff"/><stop offset=".38" stop-color="#fff"/><stop offset=".45" stop-color="#4f7f95"/><stop offset=".7" stop-color="#6f9aad"/><stop offset="1" stop-color="#8aaab8"/></linearGradient></defs><rect x="140.00" y="255.00" width="195.00" height="118.00" fill="#efefee"/><rect x="140.00" y="255.00" width="195.00" height="6.30" fill="#ebebea"/><rect x="140.00" y="261.30" width="195.00" height="0.50" fill="#dcdcdc"/><rect x="228.00" y="257.60" width="19.00" height="1.20" fill="#666" fill-opacity="0.55"/><rect x="322.50" y="256.30" width="4.00" height="3.50" fill="#dadada" stroke="#b5b5b5" stroke-width="0.4"/><rect x="329.50" y="256.30" width="4.00" height="3.50" fill="#dadada" stroke="#b5b5b5" stroke-width="0.4"/><rect x="146.95" y="265.70" width="15.60" height="20.10" fill="#000" fill-opacity="0.12"/><rect x="147.25" y="265.50" width="15.00" height="19.50" fill="#fff"/><rect x="151.75" y="274.30" width="6.00" height="0.60" fill="#aaa"/><rect x="173.95" y="265.70" width="15.60" height="20.10" fill="#000" fill-opacity="0.12"/><rect x="174.25" y="265.50" width="15.00" height="19.50" fill="#fff"/><rect x="175.75" y="268.00" width="7.00" height="0.55" fill="#777"/><rect x="175.75" y="269.35" width="7.00" height="0.55" fill="#777"/><rect x="175.75" y="270.70" width="7.00" height="0.55" fill="#777"/><rect x="175.75" y="272.05" width="7.00" height="0.55" fill="#777"/><rect x="175.75" y="273.40" width="7.00" height="0.55" fill="#777"/><rect x="175.75" y="274.75" width="7.00" height="0.55" fill="#777"/><rect x="175.75" y="276.10" width="7.00" height="0.55" fill="#777"/><rect x="175.75" y="277.45" width="7.00" height="0.55" fill="#777"/><rect x="175.75" y="278.80" width="7.00" height="0.55" fill="#777"/><rect x="175.75" y="280.15" width="7.00" height="0.55" fill="#777"/><rect x="175.75" y="281.50" width="7.00" height="0.55" fill="#777"/><rect x="183.75" y="268.50" width="4.00" height="3.00" fill="#6a7a5a"/><rect x="183.75" y="273.50" width="4.00" height="0.50" fill="#999"/><rect x="183.75" y="274.80" width="4.00" height="0.50" fill="#999"/><rect x="183.75" y="276.10" width="4.00" height="0.50" fill="#999"/><rect x="183.75" y="277.40" width="4.00" height="0.50" fill="#999"/><rect x="183.75" y="278.70" width="4.00" height="0.50" fill="#999"/><rect x="199.45" y="268.95" width="19.35" height="14.35" fill="#000" fill-opacity="0.12"/><rect x="199.75" y="268.75" width="18.75" height="13.75" fill="#f0f0e4"/><rect x="199.75" y="268.75" width="2.34" height="2.29" fill="#c8ccb0"/><rect x="199.75" y="271.04" width="2.34" height="2.29" fill="#b0b890"/><rect x="199.75" y="273.33" width="2.34" height="2.29" fill="#b0b890"/><rect x="199.75" y="275.62" width="2.34" height="2.29" fill="#c8ccb0"/><rect x="199.75" y="277.91" width="2.34" height="2.29" fill="#8a9070"/><rect x="199.75" y="280.20" width="2.34" height="2.29" fill="#b0b890"/><rect x="202.09" y="268.75" width="2.34" height="2.29" fill="#5a6250"/><rect x="202.09" y="271.04" width="2.34" height="2.29" fill="#e0e4d0"/><rect x="202.09" y="273.33" width="2.34" height="2.29" fill="#b0b890"/><rect x="202.09" y="275.62" width="2.34" height="2.29" fill="#6a7058"/><rect x="202.09" y="277.91" width="2.34" height="2.29" fill="#b0b890"/><rect x="202.09" y="280.20" width="2.34" height="2.29" fill="#6a7058"/><rect x="204.43" y="268.75" width="2.34" height="2.29" fill="#d8dcc0"/><rect x="204.43" y="271.04" width="2.34" height="2.29" fill="#5a6250"/><rect x="204.43" y="273.33" width="2.34" height="2.29" fill="#8a9070"/><rect x="204.43" y="275.62" width="2.34" height="2.29" fill="#b0b890"/><rect x="204.43" y="277.91" width="2.34" height="2.29" fill="#c8ccb0"/><rect x="204.43" y="280.20" width="2.34" height="2.29" fill="#c8ccb0"/><rect x="206.77" y="268.75" width="2.34" height="2.29" fill="#e0e4d0"/><rect x="206.77" y="271.04" width="2.34" height="2.29" fill="#5a6250"/><rect x="206.77" y="273.33" width="2.34" height="2.29" fill="#b0b890"/><rect x="206.77" y="275.62" width="2.34" height="2.29" fill="#d8dcc0"/><rect x="206.77" y="277.91" width="2.34" height="2.29" fill="#b0b890"/><rect x="206.77" y="280.20" width="2.34" height="2.29" fill="#5a6250"/><rect x="209.11" y="268.75" width="2.34" height="2.29" fill="#5a6250"/><rect x="209.11" y="271.04" width="2.34" height="2.29" fill="#e0e4d0"/><rect x="209.11" y="273.33" width="2.34" height="2.29" fill="#d8dcc0"/><rect x="209.11" y="275.62" width="2.34" height="2.29" fill="#c8ccb0"/><rect x="209.11" y="277.91" width="2.34" height="2.29" fill="#c8ccb0"/><rect x="209.11" y="280.20" width="2.34" height="2.29" fill="#e0e4d0"/><rect x="211.45" y="268.75" width="2.34" height="2.29" fill="#c8ccb0"/><rect x="211.45" y="271.04" width="2.34" height="2.29" fill="#d8dcc0"/><rect x="211.45" y="273.33" width="2.34" height="2.29" fill="#b0b890"/><rect x="211.45" y="275.62" width="2.34" height="2.29" fill="#5a6250"/><rect x="211.45" y="277.91" width="2.34" height="2.29" fill="#e0e4d0"/><rect x="211.45" y="280.20" width="2.34" height="2.29" fill="#6a7058"/><rect x="213.79" y="268.75" width="2.34" height="2.29" fill="#e0e4d0"/><rect x="213.79" y="271.04" width="2.34" height="2.29" fill="#d8dcc0"/><rect x="213.79" y="273.33" width="2.34" height="2.29" fill="#6a7058"/><rect x="213.79" y="275.62" width="2.34" height="2.29" fill="#c8ccb0"/><rect x="213.79" y="277.91" width="2.34" height="2.29" fill="#d8dcc0"/><rect x="213.79" y="280.20" width="2.34" height="2.29" fill="#b0b890"/><rect x="216.13" y="268.75" width="2.34" height="2.29" fill="#6a7058"/><rect x="216.13" y="271.04" width="2.34" height="2.29" fill="#8a9070"/><rect x="216.13" y="273.33" width="2.34" height="2.29" fill="#d8dcc0"/><rect x="216.13" y="275.62" width="2.34" height="2.29" fill="#6a7058"/><rect x="216.13" y="277.91" width="2.34" height="2.29" fill="#d8dcc0"/><rect x="216.13" y="280.20" width="2.34" height="2.29" fill="#d8dcc0"/><rect x="228.20" y="265.70" width="15.60" height="20.10" fill="#000" fill-opacity="0.12"/><rect x="228.50" y="265.50" width="15.00" height="19.50" fill="#fff"/><rect x="230.50" y="268.00" width="5.00" height="0.50" fill="#999"/><rect x="230.50" y="269.20" width="5.00" height="0.50" fill="#999"/><rect x="230.50" y="270.40" width="5.00" height="0.50" fill="#999"/><rect x="255.70" y="265.70" width="15.60" height="20.10" fill="#000" fill-opacity="0.12"/><rect x="256.00" y="265.50" width="15.00" height="19.50" fill="#fff"/><rect x="283.20" y="265.70" width="15.60" height="20.10" fill="#000" fill-opacity="0.12"/><rect x="283.50" y="265.50" width="15.00" height="19.50" fill="#fff"/><rect x="285.50" y="268.00" width="6.00" height="0.50" fill="#6b86c0"/><rect x="285.50" y="269.30" width="6.00" height="0.50" fill="#6b86c0"/><rect x="285.50" y="270.60" width="6.00" height="0.50" fill="#6b86c0"/><rect x="285.50" y="271.90" width="6.00" height="0.50" fill="#6b86c0"/><rect x="286.00" y="274.50" width="8.00" height="0.50" fill="#7a90c8"/><rect x="286.00" y="275.80" width="8.00" height="0.50" fill="#7a90c8"/><rect x="286.00" y="277.10" width="8.00" height="0.50" fill="#7a90c8"/><rect x="286.00" y="278.40" width="8.00" height="0.50" fill="#7a90c8"/><rect x="310.20" y="265.70" width="15.60" height="20.10" fill="#000" fill-opacity="0.12"/><rect x="310.50" y="265.50" width="15.00" height="19.50" fill="#fff"/><rect x="314.00" y="268.50" width="5.00" height="0.50" fill="#99a"/><rect x="314.00" y="269.80" width="5.00" height="0.50" fill="#99a"/><rect x="315.00" y="277.50" width="6.00" height="0.50" fill="#6b80c8"/><rect x="315.00" y="278.80" width="6.00" height="0.50" fill="#6b80c8"/><rect x="146.25" y="287.60" width="17.00" height="1.00" fill="#8a8a8a" fill-opacity="0.5"/><rect x="150.07" y="290.80" width="9.35" height="1.00" fill="#aaa" fill-opacity="0.6"/><rect x="171.75" y="287.60" width="20.00" height="1.00" fill="#8a8a8a" fill-opacity="0.5"/><rect x="202.25" y="287.60" width="13.00" height="1.00" fill="#8a8a8a" fill-opacity="0.5"/><rect x="229.00" y="287.60" width="14.00" height="1.00" fill="#8a8a8a" fill-opacity="0.5"/><rect x="255.50" y="287.60" width="16.00" height="1.00" fill="#8a8a8a" fill-opacity="0.5"/><rect x="285.50" y="287.60" width="11.00" height="1.00" fill="#8a8a8a" fill-opacity="0.5"/><rect x="315.50" y="287.60" width="5.00" height="1.00" fill="#8a8a8a" fill-opacity="0.5"/><rect x="316.62" y="290.80" width="2.75" height="1.00" fill="#aaa" fill-opacity="0.6"/><rect x="144.70" y="299.60" width="19.70" height="15.60" fill="#000" fill-opacity="0.12"/><rect x="145.00" y="299.40" width="19.10" height="15.00" fill="#fff"/><rect x="172.20" y="299.60" width="19.40" height="15.60" fill="#000" fill-opacity="0.12"/><rect x="172.50" y="299.40" width="18.80" height="15.00" fill="#fff"/><rect x="200.95" y="297.70" width="15.60" height="20.10" fill="#000" fill-opacity="0.12"/><rect x="201.25" y="297.50" width="15.00" height="19.50" fill="#fff"/><rect x="228.20" y="297.70" width="15.60" height="20.10" fill="#000" fill-opacity="0.12"/><rect x="228.50" y="297.50" width="15.00" height="19.50" fill="#fff"/><rect x="255.70" y="297.70" width="15.60" height="20.10" fill="#000" fill-opacity="0.12"/><rect x="256.00" y="297.50" width="15.00" height="19.50" fill="#fff"/><rect x="283.20" y="297.70" width="15.60" height="20.10" fill="#000" fill-opacity="0.12"/><rect x="283.50" y="297.50" width="15.00" height="19.50" fill="url(#g3a)"/><rect x="288.00" y="299.50" width="6.00" height="2.50" fill="#5a7080"/><rect x="310.20" y="297.70" width="15.60" height="20.10" fill="#000" fill-opacity="0.12"/><rect x="310.50" y="297.50" width="15.00" height="19.50" fill="#fff"/><rect x="312.50" y="300.50" width="11.00" height="0.50" fill="#888"/><rect x="312.50" y="301.70" width="11.00" height="0.50" fill="#888"/><rect x="312.50" y="302.90" width="11.00" height="0.50" fill="#888"/><rect x="312.50" y="304.10" width="11.00" height="0.50" fill="#888"/><rect x="312.50" y="305.30" width="11.00" height="0.50" fill="#888"/><rect x="312.50" y="306.50" width="11.00" height="0.50" fill="#888"/><rect x="312.50" y="307.70" width="11.00" height="0.50" fill="#888"/><rect x="312.50" y="308.90" width="11.00" height="0.50" fill="#888"/><rect x="312.50" y="310.10" width="11.00" height="0.50" fill="#888"/><rect x="312.50" y="311.30" width="11.00" height="0.50" fill="#888"/><rect x="312.50" y="312.50" width="11.00" height="0.50" fill="#888"/><rect x="146.75" y="320.10" width="16.00" height="1.00" fill="#8a8a8a" fill-opacity="0.5"/><rect x="174.75" y="320.10" width="14.00" height="1.00" fill="#8a8a8a" fill-opacity="0.5"/><rect x="203.75" y="320.10" width="10.00" height="1.00" fill="#8a8a8a" fill-opacity="0.5"/><rect x="204.75" y="323.30" width="8.00" height="1.00" fill="#aaa" fill-opacity="0.6"/><rect x="234.00" y="320.10" width="4.00" height="1.00" fill="#8a8a8a" fill-opacity="0.5"/><rect x="230.00" y="323.30" width="12.00" height="1.00" fill="#aaa" fill-opacity="0.6"/><rect x="255.50" y="320.10" width="16.00" height="1.00" fill="#8a8a8a" fill-opacity="0.5"/><rect x="281.00" y="320.10" width="20.00" height="1.00" fill="#8a8a8a" fill-opacity="0.5"/><rect x="283.00" y="323.30" width="16.00" height="1.00" fill="#aaa" fill-opacity="0.6"/><rect x="309.00" y="320.10" width="18.00" height="1.00" fill="#8a8a8a" fill-opacity="0.5"/><rect x="310.80" y="323.30" width="14.40" height="1.00" fill="#aaa" fill-opacity="0.6"/><rect x="146.95" y="332.20" width="15.60" height="20.10" fill="#000" fill-opacity="0.12"/><rect x="147.25" y="332.00" width="15.00" height="19.50" fill="#fff"/><rect x="149.75" y="337.00" width="10.00" height="0.50" fill="#888"/><rect x="149.75" y="338.30" width="10.00" height="0.50" fill="#888"/><rect x="149.75" y="339.60" width="10.00" height="0.50" fill="#888"/><rect x="149.75" y="340.90" width="10.00" height="0.50" fill="#888"/><rect x="149.75" y="342.20" width="10.00" height="0.50" fill="#888"/><rect x="149.75" y="343.50" width="10.00" height="0.50" fill="#888"/><rect x="149.75" y="344.80" width="10.00" height="0.50" fill="#888"/><rect x="149.75" y="346.10" width="10.00" height="0.50" fill="#888"/><rect x="149.75" y="347.40" width="10.00" height="0.50" fill="#888"/><rect x="159.75" y="335.00" width="1.20" height="1.20" fill="#aaa"/><rect x="173.95" y="332.20" width="15.60" height="20.10" fill="#000" fill-opacity="0.12"/><rect x="174.25" y="332.00" width="15.00" height="19.50" fill="#fff"/><rect x="175.75" y="335.00" width="4.00" height="1.50" fill="#c05a6a"/><rect x="175.75" y="337.00" width="12.00" height="0.75" fill="#222"/><rect x="175.75" y="338.30" width="12.00" height="0.75" fill="#222"/><rect x="175.75" y="339.60" width="12.00" height="0.75" fill="#222"/><rect x="175.75" y="340.90" width="12.00" height="0.75" fill="#222"/><rect x="175.75" y="342.20" width="12.00" height="0.75" fill="#222"/><rect x="175.75" y="343.50" width="12.00" height="0.75" fill="#222"/><rect x="175.75" y="344.80" width="12.00" height="0.75" fill="#222"/><rect x="175.75" y="346.10" width="12.00" height="0.75" fill="#222"/><rect x="175.75" y="347.40" width="12.00" height="0.75" fill="#222"/><rect x="175.75" y="348.70" width="12.00" height="0.75" fill="#222"/><rect x="200.95" y="332.20" width="15.60" height="20.10" fill="#000" fill-opacity="0.12"/><rect x="201.25" y="332.00" width="15.00" height="19.50" fill="#fff"/><rect x="204.75" y="333.50" width="8.00" height="0.80" fill="#444"/><rect x="202.75" y="335.50" width="12.00" height="0.80" fill="#1e1e1e"/><rect x="202.75" y="336.80" width="12.00" height="0.80" fill="#1e1e1e"/><rect x="202.75" y="338.10" width="12.00" height="0.80" fill="#1e1e1e"/><rect x="202.75" y="339.40" width="12.00" height="0.80" fill="#1e1e1e"/><rect x="202.75" y="340.70" width="12.00" height="0.80" fill="#1e1e1e"/><rect x="202.75" y="342.00" width="12.00" height="0.80" fill="#1e1e1e"/><rect x="202.75" y="343.30" width="12.00" height="0.80" fill="#1e1e1e"/><rect x="202.75" y="344.60" width="12.00" height="0.80" fill="#1e1e1e"/><rect x="202.75" y="345.90" width="12.00" height="0.80" fill="#1e1e1e"/><rect x="202.75" y="347.20" width="12.00" height="0.80" fill="#1e1e1e"/><rect x="202.75" y="348.50" width="12.00" height="0.80" fill="#1e1e1e"/><rect x="202.75" y="349.80" width="12.00" height="0.80" fill="#1e1e1e"/><rect x="228.20" y="332.20" width="15.60" height="20.10" fill="#000" fill-opacity="0.12"/><rect x="228.50" y="332.00" width="15.00" height="19.50" fill="#fff"/><rect x="232.00" y="333.50" width="8.00" height="0.80" fill="#444"/><rect x="230.00" y="335.50" width="12.00" height="0.80" fill="#1e1e1e"/><rect x="230.00" y="336.80" width="12.00" height="0.80" fill="#1e1e1e"/><rect x="230.00" y="338.10" width="12.00" height="0.80" fill="#1e1e1e"/><rect x="230.00" y="339.40" width="12.00" height="0.80" fill="#1e1e1e"/><rect x="230.00" y="340.70" width="12.00" height="0.80" fill="#1e1e1e"/><rect x="230.00" y="342.00" width="12.00" height="0.80" fill="#1e1e1e"/><rect x="230.00" y="343.30" width="12.00" height="0.80" fill="#1e1e1e"/><rect x="230.00" y="344.60" width="12.00" height="0.80" fill="#1e1e1e"/><rect x="230.00" y="345.90" width="12.00" height="0.80" fill="#1e1e1e"/><rect x="230.00" y="347.20" width="12.00" height="0.80" fill="#1e1e1e"/><rect x="230.00" y="348.50" width="12.00" height="0.80" fill="#1e1e1e"/><rect x="230.00" y="349.80" width="12.00" height="0.80" fill="#1e1e1e"/><rect x="149.75" y="354.30" width="10.00" height="1.00" fill="#8a8a8a" fill-opacity="0.5"/><rect x="151.75" y="357.50" width="6.00" height="1.00" fill="#aaa" fill-opacity="0.6"/><rect x="177.75" y="354.30" width="8.00" height="1.00" fill="#8a8a8a" fill-opacity="0.5"/><rect x="204.75" y="354.30" width="8.00" height="1.00" fill="#8a8a8a" fill-opacity="0.5"/><rect x="232.00" y="354.30" width="8.00" height="1.00" fill="#8a8a8a" fill-opacity="0.5"/></svg></div>
<div class="lbl" style="left:209px;top:380px;width:56px"><span>Documents</span></div>
<div class="win" id="w4" style="left:444px;top:255px;width:188px;height:117px"><svg class="abs" style="left:0;top:0" width="188" height="118" viewBox="444 255 188 118"><defs><linearGradient id="g4a" x1="0" x2="0" y1="0" y2="1"><stop offset="0" stop-color="#4ab0ac"/><stop offset=".6" stop-color="#36a0a0"/><stop offset="1" stop-color="#5ab4b0"/></linearGradient>
<linearGradient id="g4b" x1="0" x2="0" y1="0" y2="1"><stop offset="0" stop-color="#7c8288"/><stop offset=".3" stop-color="#8a9096"/><stop offset=".4" stop-color="#5a6260"/><stop offset=".7" stop-color="#a8aeaa"/><stop offset="1" stop-color="#8a928e"/></linearGradient>
<radialGradient id="g4c" cx=".4" cy=".35" r=".65"><stop offset="0" stop-color="#fafafa"/><stop offset=".7" stop-color="#d0d0d0"/><stop offset="1" stop-color="#9a9a9a"/></radialGradient></defs><rect x="444.00" y="255.00" width="188.00" height="118.00" fill="#ffffff"/><rect x="444.00" y="255.00" width="188.00" height="12.00" fill="#e9e9e8"/><rect x="444.00" y="266.80" width="188.00" height="0.60" fill="#cfcfcf"/><rect x="510.00" y="257.60" width="56.00" height="1.00" fill="#a8a8a8" fill-opacity="0.5"/><rect x="629.50" y="256.80" width="1.50" height="1.50" fill="#bbb"/><rect x="445.20" y="261.80" width="10.20" height="5.00" fill="#f3f3f3" stroke="#c4c4c4" stroke-width="0.4" rx="0.6"/><rect x="450.30" y="261.80" width="0.40" height="5.00" fill="#c4c4c4"/><rect x="457.40" y="261.60" width="166.60" height="5.20" fill="#fbfbfb" stroke="#c8c8c8" stroke-width="0.4" rx="0.6"/><rect x="459.00" y="263.70" width="2.00" height="1.20" fill="#666" fill-opacity="0.8"/><rect x="462.00" y="263.80" width="46.00" height="0.90" fill="#9a9a9a" fill-opacity="0.5"/><rect x="620.00" y="263.20" width="3.00" height="2.20" fill="#aaa" fill-opacity="0.7"/><rect x="625.80" y="261.80" width="4.80" height="5.00" fill="#f3f3f3" stroke="#c4c4c4" stroke-width="0.4" rx="0.6"/><rect x="629.40" y="267.40" width="2.60" height="105.60" fill="#ededed"/><circle cx="459.3" cy="279.3" r="9" fill="url(#g4c)"/><rect x="456.53" y="274.11" width="1.60" height="1.20" fill="#5a5a5a" fill-opacity="0.55"/><rect x="461.11" y="273.01" width="1.60" height="1.20" fill="#5a5a5a" fill-opacity="0.55"/><rect x="459.50" y="277.12" width="1.60" height="1.20" fill="#5a5a5a" fill-opacity="0.55"/><rect x="452.81" y="279.10" width="1.60" height="1.20" fill="#5a5a5a" fill-opacity="0.55"/><rect x="452.52" y="278.07" width="1.60" height="1.20" fill="#5a5a5a" fill-opacity="0.55"/><rect x="457.94" y="283.58" width="1.60" height="1.20" fill="#5a5a5a" fill-opacity="0.55"/><rect x="453.73" y="275.13" width="1.60" height="1.20" fill="#5a5a5a" fill-opacity="0.55"/><rect x="460.78" y="285.27" width="1.60" height="1.20" fill="#5a5a5a" fill-opacity="0.55"/><rect x="460.08" y="277.55" width="1.60" height="1.20" fill="#5a5a5a" fill-opacity="0.55"/><rect x="464.02" y="276.05" width="1.60" height="1.20" fill="#5a5a5a" fill-opacity="0.55"/><rect x="454.02" y="273.65" width="1.60" height="1.20" fill="#5a5a5a" fill-opacity="0.55"/><rect x="456.32" y="283.43" width="1.60" height="1.20" fill="#5a5a5a" fill-opacity="0.55"/><rect x="450.50" y="289.60" width="18.00" height="1.90" fill="#555" fill-opacity="0.5"/><rect x="452.00" y="293.80" width="15.00" height="0.90" fill="#888" fill-opacity="0.45"/><rect x="448.00" y="301.20" width="12.17" height="1.00" fill="#3a5fb0" fill-opacity="0.42"/><rect x="448.00" y="304.20" width="16.98" height="1.00" fill="#3a5fb0" fill-opacity="0.42"/><rect x="448.00" y="307.20" width="17.67" height="1.00" fill="#3a5fb0" fill-opacity="0.42"/><rect x="448.00" y="310.20" width="14.47" height="1.00" fill="#3a5fb0" fill-opacity="0.42"/><rect x="448.00" y="313.20" width="16.57" height="1.00" fill="#3a5fb0" fill-opacity="0.42"/><rect x="448.00" y="316.20" width="10.75" height="1.00" fill="#3a5fb0" fill-opacity="0.42"/><rect x="448.00" y="319.60" width="22.00" height="0.40" fill="#cde"/><rect x="449.00" y="320.60" width="1.20" height="1.20" fill="#888"/><rect x="451.00" y="320.60" width="14.00" height="1.00" fill="#888" fill-opacity="0.6"/><rect x="450.00" y="323.60" width="8.72" height="1.00" fill="#3a5fb0" fill-opacity="0.42"/><rect x="450.00" y="326.60" width="10.47" height="1.00" fill="#3a5fb0" fill-opacity="0.42"/><rect x="450.00" y="329.60" width="16.16" height="1.00" fill="#3a5fb0" fill-opacity="0.42"/><rect x="450.00" y="332.60" width="13.13" height="1.00" fill="#3a5fb0" fill-opacity="0.42"/><rect x="450.00" y="335.60" width="11.77" height="1.00" fill="#3a5fb0" fill-opacity="0.42"/><rect x="448.00" y="338.80" width="22.00" height="0.40" fill="#cde"/><rect x="449.00" y="339.80" width="1.20" height="1.20" fill="#888"/><rect x="451.00" y="339.80" width="14.00" height="1.00" fill="#888" fill-opacity="0.6"/><rect x="448.00" y="343.60" width="22.00" height="0.40" fill="#cde"/><rect x="449.00" y="344.60" width="1.20" height="1.20" fill="#888"/><rect x="451.00" y="344.60" width="14.00" height="1.00" fill="#888" fill-opacity="0.6"/><rect x="448.00" y="348.20" width="22.00" height="0.40" fill="#cde"/><rect x="449.00" y="349.20" width="1.20" height="1.20" fill="#888"/><rect x="451.00" y="349.20" width="14.00" height="1.00" fill="#888" fill-opacity="0.6"/><rect x="450.00" y="352.20" width="15.03" height="1.00" fill="#3a5fb0" fill-opacity="0.42"/><rect x="450.00" y="355.20" width="13.44" height="1.00" fill="#3a5fb0" fill-opacity="0.42"/><rect x="450.00" y="358.20" width="11.60" height="1.00" fill="#3a5fb0" fill-opacity="0.42"/><rect x="450.00" y="361.20" width="17.53" height="1.00" fill="#3a5fb0" fill-opacity="0.42"/><rect x="450.00" y="364.20" width="16.39" height="1.00" fill="#3a5fb0" fill-opacity="0.42"/><rect x="450.00" y="367.20" width="10.93" height="1.00" fill="#3a5fb0" fill-opacity="0.42"/><rect x="450.00" y="370.20" width="14.89" height="1.00" fill="#3a5fb0" fill-opacity="0.42"/><rect x="450.00" y="373.20" width="14.30" height="1.00" fill="#3a5fb0" fill-opacity="0.42"/><rect x="473.80" y="281.60" width="152.20" height="0.50" fill="#a7d7f9"/><rect x="473.80" y="281.60" width="0.50" height="92.00" fill="#a7d7f9"/><rect x="474.30" y="282.10" width="151.70" height="91.00" fill="#fff"/><rect x="474.00" y="276.00" width="9.00" height="5.60" fill="#f6f8fb"/><rect x="476.00" y="278.30" width="5.00" height="0.90" fill="#888" fill-opacity="0.6"/><rect x="483.50" y="276.00" width="6.50" height="5.60" fill="#eef3fa"/><rect x="485.00" y="278.30" width="3.50" height="0.90" fill="#3a5fb0" fill-opacity="0.6"/><rect x="556.50" y="276.00" width="7.00" height="5.60" fill="#fff"/><rect x="558.00" y="278.30" width="4.00" height="0.90" fill="#555" fill-opacity="0.6"/><rect x="564.00" y="276.00" width="22.00" height="5.60" fill="#eef3fa"/><rect x="565.00" y="278.30" width="4.00" height="0.90" fill="#3a5fb0" fill-opacity="0.6"/><rect x="572.00" y="278.30" width="13.00" height="0.90" fill="#3a5fb0" fill-opacity="0.6"/><rect x="587.40" y="276.60" width="39.30" height="4.20" fill="#fff" stroke="#aaa" stroke-width="0.4"/><rect x="589.00" y="278.30" width="6.00" height="0.80" fill="#bbb"/><rect x="623.20" y="277.80" width="2.00" height="2.00" fill="#666" fill-opacity="0.6"/><rect x="600.00" y="270.00" width="16.00" height="1.00" fill="#3a5fb0" fill-opacity="0.6"/><rect x="617.50" y="269.60" width="1.50" height="1.60" fill="#d9a030"/><rect x="619.50" y="270.00" width="6.00" height="1.00" fill="#3a5fb0" fill-opacity="0.6"/><text x="478" y="289.8" font-family="Liberation Serif" font-size="7.3" fill="#111" textLength="26" lengthAdjust="spacingAndGlyphs">Windsurfing</text><rect x="478.00" y="290.80" width="146.00" height="0.35" fill="#aaa"/><rect x="478.00" y="292.00" width="37.00" height="0.80" fill="#666" fill-opacity="0.4"/><rect x="482.00" y="297.20" width="38.00" height="0.80" fill="#555" fill-opacity="0.4"/><rect x="521.00" y="297.20" width="12.00" height="0.80" fill="#3a5fb0" fill-opacity="0.45"/><rect x="478.00" y="302.30" width="12.00" height="0.95" fill="#111" fill-opacity="0.8"/><rect x="478.00" y="302.40" width="10.88" height="0.75" fill="#333" fill-opacity="0.36"/><rect x="489.88" y="302.40" width="5.59" height="0.75" fill="#333" fill-opacity="0.36"/><rect x="496.47" y="302.40" width="4.06" height="0.75" fill="#333" fill-opacity="0.36"/><rect x="501.53" y="302.40" width="9.81" height="0.75" fill="#333" fill-opacity="0.36"/><rect x="512.34" y="302.40" width="7.40" height="0.75" fill="#3a5fb0" fill-opacity="0.36"/><rect x="520.75" y="302.40" width="9.01" height="0.75" fill="#333" fill-opacity="0.36"/><rect x="530.76" y="302.40" width="8.16" height="0.75" fill="#333" fill-opacity="0.36"/><rect x="539.92" y="302.40" width="5.82" height="0.75" fill="#333" fill-opacity="0.36"/><rect x="546.74" y="302.40" width="8.35" height="0.75" fill="#333" fill-opacity="0.36"/><rect x="556.09" y="302.40" width="7.11" height="0.75" fill="#333" fill-opacity="0.36"/><rect x="564.20" y="302.40" width="11.50" height="0.75" fill="#333" fill-opacity="0.36"/><rect x="576.70" y="302.40" width="2.30" height="0.75" fill="#3a5fb0" fill-opacity="0.36"/><rect x="478.00" y="305.40" width="9.31" height="0.75" fill="#333" fill-opacity="0.36"/><rect x="488.31" y="305.40" width="11.94" height="0.75" fill="#333" fill-opacity="0.36"/><rect x="501.25" y="305.40" width="5.56" height="0.75" fill="#333" fill-opacity="0.36"/><rect x="507.81" y="305.40" width="9.02" height="0.75" fill="#3a5fb0" fill-opacity="0.36"/><rect x="517.83" y="305.40" width="7.16" height="0.75" fill="#333" fill-opacity="0.36"/><rect x="525.99" y="305.40" width="4.05" height="0.75" fill="#3a5fb0" fill-opacity="0.36"/><rect x="531.04" y="305.40" width="9.91" height="0.75" fill="#333" fill-opacity="0.36"/><rect x="541.95" y="305.40" width="5.23" height="0.75" fill="#333" fill-opacity="0.36"/><rect x="548.18" y="305.40" width="10.84" height="0.75" fill="#3a5fb0" fill-opacity="0.36"/><rect x="560.03" y="305.40" width="7.04" height="0.75" fill="#333" fill-opacity="0.36"/><rect x="568.07" y="305.40" width="10.93" height="0.75" fill="#333" fill-opacity="0.36"/><rect x="478.00" y="308.40" width="10.78" height="0.75" fill="#333" fill-opacity="0.36"/><rect x="489.78" y="308.40" width="6.74" height="0.75" fill="#333" fill-opacity="0.36"/><rect x="497.51" y="308.40" width="10.96" height="0.75" fill="#333" fill-opacity="0.36"/><rect x="509.47" y="308.40" width="4.36" height="0.75" fill="#333" fill-opacity="0.36"/><rect x="514.83" y="308.40" width="5.09" height="0.75" fill="#333" fill-opacity="0.36"/><rect x="520.92" y="308.40" width="7.36" height="0.75" fill="#333" fill-opacity="0.36"/><rect x="529.28" y="308.40" width="5.36" height="0.75" fill="#3a5fb0" fill-opacity="0.36"/><rect x="535.65" y="308.40" width="6.77" height="0.75" fill="#333" fill-opacity="0.36"/><rect x="543.42" y="308.40" width="8.10" height="0.75" fill="#333" fill-opacity="0.36"/><rect x="552.51" y="308.40" width="9.21" height="0.75" fill="#333" fill-opacity="0.36"/><rect x="562.73" y="308.40" width="8.56" height="0.75" fill="#333" fill-opacity="0.36"/><rect x="572.29" y="308.40" width="3.49" height="0.75" fill="#333" fill-opacity="0.36"/><rect x="576.77" y="308.40" width="2.23" height="0.75" fill="#333" fill-opacity="0.36"/><rect x="478.00" y="311.40" width="10.18" height="0.75" fill="#333" fill-opacity="0.36"/><rect x="489.18" y="311.40" width="6.59" height="0.75" fill="#3a5fb0" fill-opacity="0.36"/><rect x="496.77" y="311.40" width="8.71" height="0.75" fill="#3a5fb0" fill-opacity="0.36"/><rect x="506.48" y="311.40" width="3.61" height="0.75" fill="#333" fill-opacity="0.36"/><rect x="511.09" y="311.40" width="4.46" height="0.75" fill="#333" fill-opacity="0.36"/><rect x="516.55" y="311.40" width="3.47" height="0.75" fill="#3a5fb0" fill-opacity="0.36"/><rect x="521.02" y="311.40" width="4.36" height="0.75" fill="#3a5fb0" fill-opacity="0.36"/><rect x="526.38" y="311.40" width="6.27" height="0.75" fill="#3a5fb0" fill-opacity="0.36"/><rect x="533.65" y="311.40" width="10.87" height="0.75" fill="#333" fill-opacity="0.36"/><rect x="545.52" y="311.40" width="4.34" height="0.75" fill="#333" fill-opacity="0.36"/><rect x="550.86" y="311.40" width="6.13" height="0.75" fill="#333" fill-opacity="0.36"/><rect x="557.99" y="311.40" width="4.11" height="0.75" fill="#333" fill-opacity="0.36"/><rect x="563.09" y="311.40" width="11.94" height="0.75" fill="#333" fill-opacity="0.36"/><rect x="576.03" y="311.40" width="2.97" height="0.75" fill="#3a5fb0" fill-opacity="0.36"/><rect x="478.00" y="314.40" width="3.92" height="0.75" fill="#333" fill-opacity="0.36"/><rect x="482.92" y="314.40" width="5.38" height="0.75" fill="#333" fill-opacity="0.36"/><rect x="489.30" y="314.40" width="4.45" height="0.75" fill="#3a5fb0" fill-opacity="0.36"/><rect x="494.76" y="314.40" width="11.56" height="0.75" fill="#333" fill-opacity="0.36"/><rect x="507.31" y="314.40" width="4.32" height="0.75" fill="#333" fill-opacity="0.36"/><rect x="512.63" y="314.40" width="3.24" height="0.75" fill="#333" fill-opacity="0.36"/><rect x="516.88" y="314.40" width="11.81" height="0.75" fill="#333" fill-opacity="0.36"/><rect x="529.68" y="314.40" width="9.27" height="0.75" fill="#333" fill-opacity="0.36"/><rect x="539.95" y="314.40" width="6.30" height="0.75" fill="#333" fill-opacity="0.36"/><rect x="547.25" y="314.40" width="9.95" height="0.75" fill="#333" fill-opacity="0.36"/><rect x="558.20" y="314.40" width="10.01" height="0.75" fill="#333" fill-opacity="0.36"/><rect x="569.21" y="314.40" width="5.01" height="0.75" fill="#333" fill-opacity="0.36"/><rect x="575.22" y="314.40" width="3.78" height="0.75" fill="#333" fill-opacity="0.36"/><rect x="478.00" y="317.40" width="10.25" height="0.75" fill="#333" fill-opacity="0.36"/><rect x="489.25" y="317.40" width="9.66" height="0.75" fill="#333" fill-opacity="0.36"/><rect x="499.91" y="317.40" width="7.66" height="0.75" fill="#333" fill-opacity="0.36"/><rect x="508.57" y="317.40" width="3.26" height="0.75" fill="#3a5fb0" fill-opacity="0.36"/><rect x="512.83" y="317.40" width="5.51" height="0.75" fill="#333" fill-opacity="0.36"/><rect x="519.35" y="317.40" width="9.23" height="0.75" fill="#333" fill-opacity="0.36"/><rect x="529.58" y="317.40" width="7.03" height="0.75" fill="#333" fill-opacity="0.36"/><rect x="537.61" y="317.40" width="11.89" height="0.75" fill="#333" fill-opacity="0.36"/><rect x="550.50" y="317.40" width="6.28" height="0.75" fill="#333" fill-opacity="0.36"/><rect x="557.78" y="317.40" width="5.04" height="0.75" fill="#333" fill-opacity="0.36"/><rect x="563.82" y="317.40" width="4.84" height="0.75" fill="#333" fill-opacity="0.36"/><rect x="569.66" y="317.40" width="9.34" height="0.75" fill="#333" fill-opacity="0.36"/><rect x="478.00" y="320.40" width="7.32" height="0.75" fill="#333" fill-opacity="0.36"/><rect x="486.32" y="320.40" width="10.20" height="0.75" fill="#3a5fb0" fill-opacity="0.36"/><rect x="497.51" y="320.40" width="8.49" height="0.75" fill="#333" fill-opacity="0.36"/><rect x="478.00" y="325.40" width="10.04" height="0.75" fill="#333" fill-opacity="0.36"/><rect x="489.04" y="325.40" width="7.30" height="0.75" fill="#333" fill-opacity="0.36"/><rect x="497.34" y="325.40" width="10.10" height="0.75" fill="#333" fill-opacity="0.36"/><rect x="508.45" y="325.40" width="10.21" height="0.75" fill="#333" fill-opacity="0.36"/><rect x="519.65" y="325.40" width="6.56" height="0.75" fill="#333" fill-opacity="0.36"/><rect x="527.22" y="325.40" width="11.52" height="0.75" fill="#333" fill-opacity="0.36"/><rect x="539.74" y="325.40" width="4.53" height="0.75" fill="#333" fill-opacity="0.36"/><rect x="545.27" y="325.40" width="4.36" height="0.75" fill="#333" fill-opacity="0.36"/><rect x="550.63" y="325.40" width="10.26" height="0.75" fill="#333" fill-opacity="0.36"/><rect x="561.89" y="325.40" width="10.44" height="0.75" fill="#333" fill-opacity="0.36"/><rect x="573.32" y="325.40" width="5.68" height="0.75" fill="#333" fill-opacity="0.36"/><rect x="478.00" y="328.40" width="7.94" height="0.75" fill="#333" fill-opacity="0.36"/><rect x="486.94" y="328.40" width="3.13" height="0.75" fill="#333" fill-opacity="0.36"/><rect x="491.07" y="328.40" width="8.85" height="0.75" fill="#333" fill-opacity="0.36"/><rect x="500.91" y="328.40" width="11.40" height="0.75" fill="#333" fill-opacity="0.36"/><rect x="513.32" y="328.40" width="10.85" height="0.75" fill="#333" fill-opacity="0.36"/><rect x="525.16" y="328.40" width="4.90" height="0.75" fill="#333" fill-opacity="0.36"/><rect x="531.06" y="328.40" width="5.64" height="0.75" fill="#333" fill-opacity="0.36"/><rect x="537.70" y="328.40" width="8.28" height="0.75" fill="#333" fill-opacity="0.36"/><rect x="546.98" y="328.40" width="6.77" height="0.75" fill="#333" fill-opacity="0.36"/><rect x="554.75" y="328.40" width="11.19" height="0.75" fill="#333" fill-opacity="0.36"/><rect x="566.94" y="328.40" width="7.12" height="0.75" fill="#333" fill-opacity="0.36"/><rect x="575.06" y="328.40" width="3.94" height="0.75" fill="#333" fill-opacity="0.36"/><rect x="478.00" y="331.40" width="11.26" height="0.75" fill="#333" fill-opacity="0.36"/><rect x="490.26" y="331.40" width="7.79" height="0.75" fill="#333" fill-opacity="0.36"/><rect x="499.05" y="331.40" width="3.17" height="0.75" fill="#333" fill-opacity="0.36"/><rect x="503.21" y="331.40" width="4.65" height="0.75" fill="#3a5fb0" fill-opacity="0.36"/><rect x="508.86" y="331.40" width="10.19" height="0.75" fill="#333" fill-opacity="0.36"/><rect x="520.05" y="331.40" width="7.26" height="0.75" fill="#333" fill-opacity="0.36"/><rect x="528.32" y="331.40" width="8.01" height="0.75" fill="#333" fill-opacity="0.36"/><rect x="537.32" y="331.40" width="7.67" height="0.75" fill="#333" fill-opacity="0.36"/><rect x="545.99" y="331.40" width="10.06" height="0.75" fill="#3a5fb0" fill-opacity="0.36"/><rect x="557.05" y="331.40" width="8.04" height="0.75" fill="#333" fill-opacity="0.36"/><rect x="566.09" y="331.40" width="5.49" height="0.75" fill="#333" fill-opacity="0.36"/><rect x="572.58" y="331.40" width="6.42" height="0.75" fill="#333" fill-opacity="0.36"/><rect x="478.00" y="334.40" width="9.84" height="0.75" fill="#333" fill-opacity="0.36"/><rect x="488.84" y="334.40" width="6.99" height="0.75" fill="#333" fill-opacity="0.36"/><rect x="496.83" y="334.40" width="7.55" height="0.75" fill="#333" fill-opacity="0.36"/><rect x="505.38" y="334.40" width="9.23" height="0.75" fill="#333" fill-opacity="0.36"/><rect x="515.61" y="334.40" width="7.80" height="0.75" fill="#333" fill-opacity="0.36"/><rect x="524.41" y="334.40" width="11.47" height="0.75" fill="#333" fill-opacity="0.36"/><rect x="536.89" y="334.40" width="10.89" height="0.75" fill="#333" fill-opacity="0.36"/><rect x="548.78" y="334.40" width="5.34" height="0.75" fill="#333" fill-opacity="0.36"/><rect x="555.11" y="334.40" width="11.49" height="0.75" fill="#333" fill-opacity="0.36"/><rect x="567.60" y="334.40" width="4.23" height="0.75" fill="#333" fill-opacity="0.36"/><rect x="572.84" y="334.40" width="6.16" height="0.75" fill="#3a5fb0" fill-opacity="0.36"/><rect x="478.00" y="337.40" width="5.17" height="0.75" fill="#3a5fb0" fill-opacity="0.36"/><rect x="484.17" y="337.40" width="9.03" height="0.75" fill="#333" fill-opacity="0.36"/><rect x="494.19" y="337.40" width="11.07" height="0.75" fill="#333" fill-opacity="0.36"/><rect x="506.26" y="337.40" width="9.45" height="0.75" fill="#333" fill-opacity="0.36"/><rect x="516.71" y="337.40" width="4.29" height="0.75" fill="#333" fill-opacity="0.36"/><rect x="522.00" y="337.40" width="11.71" height="0.75" fill="#333" fill-opacity="0.36"/><rect x="534.70" y="337.40" width="11.57" height="0.75" fill="#333" fill-opacity="0.36"/><rect x="547.28" y="337.40" width="7.39" height="0.75" fill="#333" fill-opacity="0.36"/><rect x="555.66" y="337.40" width="10.49" height="0.75" fill="#333" fill-opacity="0.36"/><rect x="567.15" y="337.40" width="6.88" height="0.75" fill="#333" fill-opacity="0.36"/><rect x="575.04" y="337.40" width="3.96" height="0.75" fill="#333" fill-opacity="0.36"/><rect x="478.00" y="340.40" width="5.87" height="0.75" fill="#333" fill-opacity="0.36"/><rect x="484.87" y="340.40" width="3.18" height="0.75" fill="#333" fill-opacity="0.36"/><rect x="489.04" y="340.40" width="6.96" height="0.75" fill="#3a5fb0" fill-opacity="0.36"/><rect x="497.01" y="340.40" width="5.98" height="0.75" fill="#333" fill-opacity="0.36"/><rect x="503.99" y="340.40" width="7.61" height="0.75" fill="#3a5fb0" fill-opacity="0.36"/><rect x="512.60" y="340.40" width="11.87" height="0.75" fill="#333" fill-opacity="0.36"/><rect x="525.47" y="340.40" width="11.75" height="0.75" fill="#3a5fb0" fill-opacity="0.36"/><rect x="538.21" y="340.40" width="5.39" height="0.75" fill="#3a5fb0" fill-opacity="0.36"/><rect x="544.60" y="340.40" width="10.01" height="0.75" fill="#333" fill-opacity="0.36"/><rect x="555.61" y="340.40" width="4.17" height="0.75" fill="#333" fill-opacity="0.36"/><rect x="560.78" y="340.40" width="11.20" height="0.75" fill="#333" fill-opacity="0.36"/><rect x="572.98" y="340.40" width="5.33" height="0.75" fill="#333" fill-opacity="0.36"/><rect x="478.00" y="343.40" width="11.27" height="0.75" fill="#333" fill-opacity="0.36"/><rect x="490.27" y="343.40" width="9.30" height="0.75" fill="#3a5fb0" fill-opacity="0.36"/><rect x="500.58" y="343.40" width="3.52" height="0.75" fill="#333" fill-opacity="0.36"/><rect x="505.09" y="343.40" width="6.83" height="0.75" fill="#3a5fb0" fill-opacity="0.36"/><rect x="512.92" y="343.40" width="11.45" height="0.75" fill="#333" fill-opacity="0.36"/><rect x="525.37" y="343.40" width="10.21" height="0.75" fill="#3a5fb0" fill-opacity="0.36"/><rect x="536.58" y="343.40" width="10.71" height="0.75" fill="#3a5fb0" fill-opacity="0.36"/><rect x="548.29" y="343.40" width="10.76" height="0.75" fill="#333" fill-opacity="0.36"/><rect x="560.05" y="343.40" width="6.05" height="0.75" fill="#333" fill-opacity="0.36"/><rect x="567.11" y="343.40" width="11.34" height="0.75" fill="#333" fill-opacity="0.36"/><rect x="478.00" y="346.40" width="4.16" height="0.75" fill="#333" fill-opacity="0.36"/><rect x="483.16" y="346.40" width="5.15" height="0.75" fill="#3a5fb0" fill-opacity="0.36"/><rect x="489.31" y="346.40" width="4.45" height="0.75" fill="#3a5fb0" fill-opacity="0.36"/><rect x="494.76" y="346.40" width="4.82" height="0.75" fill="#333" fill-opacity="0.36"/><rect x="500.58" y="346.40" width="5.75" height="0.75" fill="#333" fill-opacity="0.36"/><rect x="507.32" y="346.40" width="5.61" height="0.75" fill="#333" fill-opacity="0.36"/><rect x="513.93" y="346.40" width="4.60" height="0.75" fill="#333" fill-opacity="0.36"/><rect x="519.53" y="346.40" width="3.16" height="0.75" fill="#333" fill-opacity="0.36"/><rect x="523.70" y="346.40" width="3.14" height="0.75" fill="#333" fill-opacity="0.36"/><rect x="527.84" y="346.40" width="7.96" height="0.75" fill="#333" fill-opacity="0.36"/><rect x="536.79" y="346.40" width="7.27" height="0.75" fill="#333" fill-opacity="0.36"/><rect x="545.07" y="346.40" width="3.96" height="0.75" fill="#333" fill-opacity="0.36"/><rect x="550.02" y="346.40" width="6.89" height="0.75" fill="#333" fill-opacity="0.36"/><rect x="557.91" y="346.40" width="10.51" height="0.75" fill="#333" fill-opacity="0.36"/><rect x="569.43" y="346.40" width="7.56" height="0.75" fill="#333" fill-opacity="0.36"/><rect x="577.99" y="346.40" width="1.01" height="0.75" fill="#333" fill-opacity="0.36"/><rect x="478.00" y="349.40" width="10.49" height="0.75" fill="#333" fill-opacity="0.36"/><rect x="489.49" y="349.40" width="8.72" height="0.75" fill="#333" fill-opacity="0.36"/><rect x="499.21" y="349.40" width="6.13" height="0.75" fill="#3a5fb0" fill-opacity="0.36"/><rect x="506.34" y="349.40" width="4.17" height="0.75" fill="#3a5fb0" fill-opacity="0.36"/><rect x="511.51" y="349.40" width="9.67" height="0.75" fill="#333" fill-opacity="0.36"/><rect x="522.18" y="349.40" width="4.47" height="0.75" fill="#3a5fb0" fill-opacity="0.36"/><rect x="527.65" y="349.40" width="2.35" height="0.75" fill="#333" fill-opacity="0.36"/><rect x="478.00" y="355.40" width="9.03" height="0.75" fill="#333" fill-opacity="0.36"/><rect x="488.03" y="355.40" width="5.18" height="0.75" fill="#333" fill-opacity="0.36"/><rect x="494.21" y="355.40" width="7.14" height="0.75" fill="#333" fill-opacity="0.36"/><rect x="502.35" y="355.40" width="7.01" height="0.75" fill="#333" fill-opacity="0.36"/><rect x="510.36" y="355.40" width="11.66" height="0.75" fill="#333" fill-opacity="0.36"/><rect x="523.02" y="355.40" width="7.92" height="0.75" fill="#333" fill-opacity="0.36"/><rect x="531.94" y="355.40" width="11.69" height="0.75" fill="#333" fill-opacity="0.36"/><rect x="544.63" y="355.40" width="6.21" height="0.75" fill="#3a5fb0" fill-opacity="0.36"/><rect x="551.84" y="355.40" width="6.43" height="0.75" fill="#333" fill-opacity="0.36"/><rect x="559.28" y="355.40" width="7.52" height="0.75" fill="#333" fill-opacity="0.36"/><rect x="567.80" y="355.40" width="7.54" height="0.75" fill="#3a5fb0" fill-opacity="0.36"/><rect x="576.34" y="355.40" width="2.66" height="0.75" fill="#3a5fb0" fill-opacity="0.36"/><rect x="478.00" y="358.40" width="6.60" height="0.75" fill="#3a5fb0" fill-opacity="0.36"/><rect x="485.60" y="358.40" width="3.20" height="0.75" fill="#333" fill-opacity="0.36"/><rect x="489.80" y="358.40" width="5.10" height="0.75" fill="#333" fill-opacity="0.36"/><rect x="495.89" y="358.40" width="7.76" height="0.75" fill="#333" fill-opacity="0.36"/><rect x="504.66" y="358.40" width="8.92" height="0.75" fill="#333" fill-opacity="0.36"/><rect x="514.57" y="358.40" width="10.91" height="0.75" fill="#333" fill-opacity="0.36"/><rect x="526.49" y="358.40" width="5.94" height="0.75" fill="#333" fill-opacity="0.36"/><rect x="533.42" y="358.40" width="4.35" height="0.75" fill="#333" fill-opacity="0.36"/><rect x="538.77" y="358.40" width="8.79" height="0.75" fill="#3a5fb0" fill-opacity="0.36"/><rect x="548.56" y="358.40" width="10.52" height="0.75" fill="#333" fill-opacity="0.36"/><rect x="560.07" y="358.40" width="8.65" height="0.75" fill="#333" fill-opacity="0.36"/><rect x="569.72" y="358.40" width="9.28" height="0.75" fill="#333" fill-opacity="0.36"/><rect x="478.00" y="361.40" width="7.71" height="0.75" fill="#333" fill-opacity="0.36"/><rect x="486.71" y="361.40" width="10.51" height="0.75" fill="#333" fill-opacity="0.36"/><rect x="498.23" y="361.40" width="10.44" height="0.75" fill="#333" fill-opacity="0.36"/><rect x="509.67" y="361.40" width="11.04" height="0.75" fill="#333" fill-opacity="0.36"/><rect x="521.70" y="361.40" width="9.24" height="0.75" fill="#333" fill-opacity="0.36"/><rect x="531.94" y="361.40" width="3.28" height="0.75" fill="#333" fill-opacity="0.36"/><rect x="536.22" y="361.40" width="6.25" height="0.75" fill="#3a5fb0" fill-opacity="0.36"/><rect x="543.47" y="361.40" width="10.52" height="0.75" fill="#333" fill-opacity="0.36"/><rect x="554.99" y="361.40" width="8.65" height="0.75" fill="#333" fill-opacity="0.36"/><rect x="564.64" y="361.40" width="9.13" height="0.75" fill="#333" fill-opacity="0.36"/><rect x="574.77" y="361.40" width="3.03" height="0.75" fill="#333" fill-opacity="0.36"/><rect x="478.00" y="364.40" width="9.73" height="0.75" fill="#333" fill-opacity="0.36"/><rect x="488.73" y="364.40" width="7.82" height="0.75" fill="#333" fill-opacity="0.36"/><rect x="497.55" y="364.40" width="3.59" height="0.75" fill="#333" fill-opacity="0.36"/><rect x="502.15" y="364.40" width="5.27" height="0.75" fill="#3a5fb0" fill-opacity="0.36"/><rect x="508.42" y="364.40" width="5.39" height="0.75" fill="#333" fill-opacity="0.36"/><rect x="514.81" y="364.40" width="4.85" height="0.75" fill="#333" fill-opacity="0.36"/><rect x="520.65" y="364.40" width="11.78" height="0.75" fill="#333" fill-opacity="0.36"/><rect x="533.43" y="364.40" width="6.44" height="0.75" fill="#333" fill-opacity="0.36"/><rect x="540.88" y="364.40" width="9.15" height="0.75" fill="#333" fill-opacity="0.36"/><rect x="551.03" y="364.40" width="8.55" height="0.75" fill="#333" fill-opacity="0.36"/><rect x="560.58" y="364.40" width="3.70" height="0.75" fill="#333" fill-opacity="0.36"/><rect x="565.28" y="364.40" width="5.29" height="0.75" fill="#333" fill-opacity="0.36"/><rect x="571.57" y="364.40" width="5.74" height="0.75" fill="#333" fill-opacity="0.36"/><rect x="478.00" y="367.40" width="3.11" height="0.75" fill="#3a5fb0" fill-opacity="0.36"/><rect x="482.11" y="367.40" width="5.42" height="0.75" fill="#333" fill-opacity="0.36"/><rect x="488.53" y="367.40" width="9.23" height="0.75" fill="#333" fill-opacity="0.36"/><rect x="498.76" y="367.40" width="5.62" height="0.75" fill="#333" fill-opacity="0.36"/><rect x="505.38" y="367.40" width="7.18" height="0.75" fill="#333" fill-opacity="0.36"/><rect x="513.56" y="367.40" width="4.07" height="0.75" fill="#333" fill-opacity="0.36"/><rect x="518.63" y="367.40" width="4.79" height="0.75" fill="#333" fill-opacity="0.36"/><rect x="524.42" y="367.40" width="11.43" height="0.75" fill="#3a5fb0" fill-opacity="0.36"/><rect x="536.85" y="367.40" width="7.13" height="0.75" fill="#333" fill-opacity="0.36"/><rect x="544.98" y="367.40" width="11.71" height="0.75" fill="#333" fill-opacity="0.36"/><rect x="557.69" y="367.40" width="5.42" height="0.75" fill="#333" fill-opacity="0.36"/><rect x="564.11" y="367.40" width="11.51" height="0.75" fill="#333" fill-opacity="0.36"/><rect x="576.62" y="367.40" width="2.38" height="0.75" fill="#333" fill-opacity="0.36"/><rect x="478.00" y="370.40" width="7.72" height="0.75" fill="#333" fill-opacity="0.36"/><rect x="486.72" y="370.40" width="4.19" height="0.75" fill="#333" fill-opacity="0.36"/><rect x="491.91" y="370.40" width="7.58" height="0.75" fill="#333" fill-opacity="0.36"/><rect x="500.49" y="370.40" width="9.33" height="0.75" fill="#333" fill-opacity="0.36"/><rect x="510.82" y="370.40" width="11.08" height="0.75" fill="#333" fill-opacity="0.36"/><rect x="522.90" y="370.40" width="3.22" height="0.75" fill="#3a5fb0" fill-opacity="0.36"/><rect x="527.12" y="370.40" width="1.38" height="0.75" fill="#333" fill-opacity="0.36"/><rect x="583.30" y="302.30" width="42.20" height="43.20" fill="#f8f9fa" stroke="#ccc" stroke-width="0.35"/><rect x="584.20" y="303.00" width="40.00" height="30.00" fill="url(#g4a)"/><path d="M586 308c8-2 20-1 36 3" stroke="#8fd0d0" stroke-width="1" fill="none" opacity=".5"/><path d="M602 322l-1-9 6-6 6 1-3 13z" fill="none" stroke="#e04060" stroke-width="1.3"/><path d="M601 313l1 9M610 321l-3-13" stroke="#3060c0" stroke-width="1"/><rect x="605" y="314" width="3" height="6" fill="#f0e0c0"/><rect x="606" y="318" width="3" height="3" fill="#d08040"/><path d="M596 324l14 1.5-1 1.5-12-1z" fill="#b02a30"/><path d="M606 326c5-3 11-5 17-3v5c-6 0-12-1-17-2z" fill="#e8f6f4" opacity=".85"/><rect x="585.00" y="334.80" width="36.00" height="0.70" fill="#444" fill-opacity="0.45"/><rect x="585.00" y="337.60" width="36.00" height="0.70" fill="#444" fill-opacity="0.45"/><rect x="585.00" y="340.40" width="36.00" height="0.70" fill="#444" fill-opacity="0.45"/><rect x="585.00" y="342.30" width="18.00" height="0.70" fill="#3a5fb0" fill-opacity="0.5"/><rect x="583.30" y="349.80" width="42.20" height="23.20" fill="#f8f9fa" stroke="#ccc" stroke-width="0.35"/><rect x="584.20" y="350.30" width="40.00" height="22.70" fill="url(#g4b)"/><path d="M584.2 358c6-1 12 0 18-1s14 1 22 0v4c-8 1-14-1-22 0s-12-1-18 0z" fill="#e8ecea" opacity=".85"/><path d="M600 362c4 2 8 6 14 7l10-1v5h-18z" fill="#dfe4e2" opacity=".8"/><path d="M588 368l10-7 8 1 -2 6z" fill="#d84050" opacity=".9"/><path d="M590 367l12-4" stroke="#fff" stroke-width=".5"/><path d="M604 361l5 5" stroke="#222" stroke-width="1.2"/></svg></div>
<div class="lbl" style="left:445px;top:380px;width:185px"><span>Windsurfing – Wikipedia, the free encyclopedia</span></div>

<div id="dock"><svg class="abs" style="left:0;top:0" width="45" height="325" viewBox="0 79 45 325"><defs><radialGradient id="dg" cx=".5" cy="1" r=".5" gradientTransform="translate(0 0) scale(1 1)"><stop offset="0" stop-color="#fff" stop-opacity=".32"/><stop offset=".6" stop-color="#fff" stop-opacity=".1"/><stop offset="1" stop-color="#fff" stop-opacity="0"/></radialGradient>
<radialGradient id="globe" cx=".35" cy=".3" r=".8"><stop offset="0" stop-color="#d8e6f8"/><stop offset=".5" stop-color="#7aa4d8"/><stop offset="1" stop-color="#2a56a0"/></radialGradient>
<linearGradient id="cab" x1="0" x2="0" y1="0" y2="1"><stop offset="0" stop-color="#f0f0ee"/><stop offset="1" stop-color="#b8b8b4"/></linearGradient>
<linearGradient id="bub" x1="0" x2="0" y1="0" y2="1"><stop offset="0" stop-color="#fdfdff"/><stop offset="1" stop-color="#c9d6ee"/></linearGradient>
<linearGradient id="fnt" x1="0" x2="0" y1="0" y2="1"><stop offset="0" stop-color="#fafafa"/><stop offset="1" stop-color="#d4d4d4"/></linearGradient>
<radialGradient id="cone" cx=".5" cy=".5" r=".5"><stop offset="0" stop-color="#333"/><stop offset=".25" stop-color="#806000"/><stop offset=".45" stop-color="#e8c010"/><stop offset=".8" stop-color="#c09000"/><stop offset="1" stop-color="#555"/></radialGradient><radialGradient id="dg2" cx=".5" cy="1" r=".5" gradientTransform="translate(.5 1) scale(1 1.3) translate(-.5 -1)"><stop offset="0" stop-color="#fff" stop-opacity=".5"/><stop offset=".5" stop-color="#fff" stop-opacity=".2"/><stop offset="1" stop-color="#fff" stop-opacity="0"/></radialGradient></defs><rect x="4" y="111.1" width="36" height="7.5" fill="url(#dg2)"/><rect x="4" y="151.1" width="36" height="7.5" fill="url(#dg2)"/><rect x="4" y="192.0" width="36" height="7.5" fill="url(#dg2)"/><rect x="4" y="271.5" width="36" height="7.5" fill="url(#dg2)"/><rect x="4" y="351.5" width="36" height="7.5" fill="url(#dg2)"/><circle cx="22.2" cy="101.4" r="13" fill="url(#globe)"/><path d="M23 91c4-1.5 9 0 12 4l-1 3-4-1-2 2 3 2-1 3 2 4-2 4-3-3-1-5-3-1v-4l2-2-3-2z" fill="#f2f2ea" opacity=".95"/><path d="M11 96c2-4 7-6 11-6l-1 3-3 1 1 3-3 2-1 4-3 0-1-3z" fill="#f0f0ea" opacity=".9"/><path d="M14 102l3 1 2 3-2 2-3-1z" fill="#e8e8e8" opacity=".6"/><path d="M18 101l3 2-1 3-3 0z" fill="#dde" opacity=".6"/><path d="M20.5 96.5l0 18 -3.8-3.8 -3.2 5.8 -2.6-1.4 3.1-5.6 -5.2-0.2z" fill="#f2f2f2" stroke="#555" stroke-width=".6"/><path d="M13 131l15-3 5 5 1 20-18 3z" fill="#e8e8e8" stroke="#aaa" stroke-width=".4"/><path d="M12 136h16l5 5v14h-21z" fill="#f4f4f4" stroke="#999" stroke-width=".4"/><path d="M9 133l13-4 4 14-12 4z" fill="#fafafa" stroke="#999" stroke-width=".4"/><path d="M14 129.5l3-1 4 15-3 1z" fill="#f0f0f0" stroke="#aaa" stroke-width=".4"/><path d="M13 138.5a5.5 3.6 0 0 0 11 0v1.6a5.5 3.6 0 0 1 -11 0z" fill="#a01818"/><path d="M13 138.5a5.5 3.6 0 0 0 11 0h-5.5z" fill="#e03030"/><path d="M18.5 138.5h5.5a5.5 3.6 0 0 0 -5.5 -3.6z" fill="#3a70c8"/><path d="M18.5 138.5v-3.6a5.5 3.6 0 0 0 -2.2 0.3z" fill="#50b040"/><rect x="13.2" y="169.2" width="18.8" height="24.6" rx="1.5" fill="url(#cab)" stroke="#8a8a86" stroke-width=".5"/><rect x="15" y="173" width="15.2" height="8.6" rx=".8" fill="#e4e4e0" stroke="#9a9a96" stroke-width=".5"/><rect x="15" y="183" width="15.2" height="8.6" rx=".8" fill="#dcdcd8" stroke="#9a9a96" stroke-width=".5"/><rect x="19.5" y="175.8" width="6" height="1.8" rx=".5" fill="#bdbdb8" stroke="#888" stroke-width=".35"/><rect x="19.5" y="185.8" width="6" height="1.8" rx=".5" fill="#bdbdb8" stroke="#888" stroke-width=".35"/><g fill="none" stroke="#dcdcdc" stroke-width="1.35" stroke-linejoin="round"><path d="M9.5 213.5h24v20h-24z"/><path d="M12.5 209.5h22v18"/><path d="M9.5 213.5l3-4M33.5 213.5l1-4M33.5 233.5l1-6"/><path d="M15.5 216.5h12v12h-12z"/><path d="M9.5 213.5l6 3M33.5 213.5l-6 3M9.5 233.5l6-5M33.5 233.5l-6-5"/><path d="M12.5 209.5v4"/></g><circle cx="9.5" cy="213.5" r="1.6" fill="#eee"/><circle cx="33.5" cy="213.5" r="1.6" fill="#eee"/><circle cx="9.5" cy="233.5" r="1.6" fill="#eee"/><circle cx="33.5" cy="233.5" r="1.6" fill="#eee"/><circle cx="12.5" cy="209.5" r="1.6" fill="#eee"/><circle cx="34.5" cy="209.5" r="1.6" fill="#eee"/><circle cx="34.5" cy="227.5" r="1.6" fill="#eee"/><path d="M12.5 250.7h20.2a2 2 0 0 1 2 2v14.3a2 2 0 0 1 -2 2h-5.5l-3.2 3.7 0.4-3.7h-11.9a2 2 0 0 1 -2 -2v-14.3a2 2 0 0 1 2 -2z" fill="url(#bub)" stroke="#7f9fd6" stroke-width=".6"/><circle cx="22.7" cy="259.7" r="3.8" fill="#3f7fe0"/><circle cx="21.3" cy="258.7" r=".55" fill="#fff"/><circle cx="24.1" cy="258.7" r=".55" fill="#fff"/><path d="M20.6 260.5a2.2 2 0 0 0 4.2 0z" fill="#fff"/><rect x="10.2" y="289.2" width="25.5" height="24.8" rx="2.5" fill="url(#fnt)" stroke="#999" stroke-width=".4"/><text x="16" y="300.5" font-family="Liberation Sans" font-size="13.5" fill="#000">a</text><text x="24.6" y="306" font-family="Liberation Sans" font-size="13" font-weight="bold" fill="#000">b</text><text x="12.5" y="312.5" font-family="Liberation Sans" font-style="italic" font-size="14" fill="#000">c</text><circle cx="22.2" cy="341" r="15" fill="#3a6a9a" fill-opacity=".14"/><g fill="none" stroke="#4a7aaa" stroke-width=".7" opacity=".35"><path d="M10 333a14 14 0 0 0 0 16"/><path d="M34.4 333a14 14 0 0 1 0 16"/></g><rect x="13" y="328.8" width="18.4" height="25.6" rx="3" fill="#f2f2f2" stroke="#aaa" stroke-width=".4"/><circle cx="22" cy="340" r="5.2" fill="url(#cone)"/><circle cx="22" cy="340" r="1.4" fill="#222"/><path d="M26 347c1 2 1 4 0 5" stroke="#bbb" stroke-width=".5" fill="none"/><rect x="13" y="372.5" width="4" height="4" rx=".7" fill="#9c9c9c"/><rect x="20.5" y="372.5" width="4" height="4" rx=".7" fill="#9c9c9c"/><rect x="27.9" y="372.5" width="4" height="4" rx=".7" fill="#9c9c9c"/><rect x="13" y="380" width="4" height="4" rx=".7" fill="#9c9c9c"/><rect x="20.5" y="380" width="4" height="4" rx=".7" fill="#9c9c9c"/><rect x="27.9" y="380" width="4" height="4" rx=".7" fill="#9c9c9c"/><rect x="13" y="387.2" width="4" height="4" rx=".7" fill="#9c9c9c"/><rect x="20.5" y="387.2" width="4" height="4" rx=".7" fill="#9c9c9c"/><rect x="27.9" y="387.2" width="4" height="4" rx=".7" fill="#9c9c9c"/></svg></div>
<div id="ws"></div>
<div class="abs" style="left:692.2px;top:57.2px;width:106.8px;height:67.2px;border:2.4px solid #c4c8c8;border-radius:3px;box-shadow:0 0 1px rgba(255,255,255,.3)"></div>
<div class="wst" style="top:60.6px;background:#f3f3f2"><svg class="abs" style="left:0;top:0" width="100" height="60.5" viewBox="140 255 195 118" preserveAspectRatio="none"><defs><linearGradient id="g3aws" x1="0" x2="0" y1="0" y2="1"><stop offset="0" stop-color="#fff"/><stop offset=".38" stop-color="#fff"/><stop offset=".45" stop-color="#4f7f95"/><stop offset=".7" stop-color="#6f9aad"/><stop offset="1" stop-color="#8aaab8"/></linearGradient></defs><rect x="140.00" y="255.00" width="195.00" height="118.00" fill="#efefee"/><rect x="140.00" y="255.00" width="195.00" height="6.30" fill="#ebebea"/><rect x="140.00" y="261.30" width="195.00" height="0.50" fill="#dcdcdc"/><rect x="228.00" y="257.60" width="19.00" height="1.20" fill="#666" fill-opacity="0.55"/><rect x="322.50" y="256.30" width="4.00" height="3.50" fill="#dadada" stroke="#b5b5b5" stroke-width="0.4"/><rect x="329.50" y="256.30" width="4.00" height="3.50" fill="#dadada" stroke="#b5b5b5" stroke-width="0.4"/><rect x="146.95" y="265.70" width="15.60" height="20.10" fill="#000" fill-opacity="0.12"/><rect x="147.25" y="265.50" width="15.00" height="19.50" fill="#fff"/><rect x="151.75" y="274.30" width="6.00" height="0.60" fill="#aaa"/><rect x="173.95" y="265.70" width="15.60" height="20.10" fill="#000" fill-opacity="0.12"/><rect x="174.25" y="265.50" width="15.00" height="19.50" fill="#fff"/><rect x="175.75" y="268.00" width="7.00" height="0.55" fill="#777"/><rect x="175.75" y="269.35" width="7.00" height="0.55" fill="#777"/><rect x="175.75" y="270.70" width="7.00" height="0.55" fill="#777"/><rect x="175.75" y="272.05" width="7.00" height="0.55" fill="#777"/><rect x="175.75" y="273.40" width="7.00" height="0.55" fill="#777"/><rect x="175.75" y="274.75" width="7.00" height="0.55" fill="#777"/><rect x="175.75" y="276.10" width="7.00" height="0.55" fill="#777"/><rect x="175.75" y="277.45" width="7.00" height="0.55" fill="#777"/><rect x="175.75" y="278.80" width="7.00" height="0.55" fill="#777"/><rect x="175.75" y="280.15" width="7.00" height="0.55" fill="#777"/><rect x="175.75" y="281.50" width="7.00" height="0.55" fill="#777"/><rect x="183.75" y="268.50" width="4.00" height="3.00" fill="#6a7a5a"/><rect x="183.75" y="273.50" width="4.00" height="0.50" fill="#999"/><rect x="183.75" y="274.80" width="4.00" height="0.50" fill="#999"/><rect x="183.75" y="276.10" width="4.00" height="0.50" fill="#999"/><rect x="183.75" y="277.40" width="4.00" height="0.50" fill="#999"/><rect x="183.75" y="278.70" width="4.00" height="0.50" fill="#999"/><rect x="199.45" y="268.95" width="19.35" height="14.35" fill="#000" fill-opacity="0.12"/><rect x="199.75" y="268.75" width="18.75" height="13.75" fill="#f0f0e4"/><rect x="199.75" y="268.75" width="2.34" height="2.29" fill="#c8ccb0"/><rect x="199.75" y="271.04" width="2.34" height="2.29" fill="#b0b890"/><rect x="199.75" y="273.33" width="2.34" height="2.29" fill="#b0b890"/><rect x="199.75" y="275.62" width="2.34" height="2.29" fill="#c8ccb0"/><rect x="199.75" y="277.91" width="2.34" height="2.29" fill="#8a9070"/><rect x="199.75" y="280.20" width="2.34" height="2.29" fill="#b0b890"/><rect x="202.09" y="268.75" width="2.34" height="2.29" fill="#5a6250"/><rect x="202.09" y="271.04" width="2.34" height="2.29" fill="#e0e4d0"/><rect x="202.09" y="273.33" width="2.34" height="2.29" fill="#b0b890"/><rect x="202.09" y="275.62" width="2.34" height="2.29" fill="#6a7058"/><rect x="202.09" y="277.91" width="2.34" height="2.29" fill="#b0b890"/><rect x="202.09" y="280.20" width="2.34" height="2.29" fill="#6a7058"/><rect x="204.43" y="268.75" width="2.34" height="2.29" fill="#d8dcc0"/><rect x="204.43" y="271.04" width="2.34" height="2.29" fill="#5a6250"/><rect x="204.43" y="273.33" width="2.34" height="2.29" fill="#8a9070"/><rect x="204.43" y="275.62" width="2.34" height="2.29" fill="#b0b890"/><rect x="204.43" y="277.91" width="2.34" height="2.29" fill="#c8ccb0"/><rect x="204.43" y="280.20" width="2.34" height="2.29" fill="#c8ccb0"/><rect x="206.77" y="268.75" width="2.34" height="2.29" fill="#e0e4d0"/><rect x="206.77" y="271.04" width="2.34" height="2.29" fill="#5a6250"/><rect x="206.77" y="273.33" width="2.34" height="2.29" fill="#b0b890"/><rect x="206.77" y="275.62" width="2.34" height="2.29" fill="#d8dcc0"/><rect x="206.77" y="277.91" width="2.34" height="2.29" fill="#b0b890"/><rect x="206.77" y="280.20" width="2.34" height="2.29" fill="#5a6250"/><rect x="209.11" y="268.75" width="2.34" height="2.29" fill="#5a6250"/><rect x="209.11" y="271.04" width="2.34" height="2.29" fill="#e0e4d0"/><rect x="209.11" y="273.33" width="2.34" height="2.29" fill="#d8dcc0"/><rect x="209.11" y="275.62" width="2.34" height="2.29" fill="#c8ccb0"/><rect x="209.11" y="277.91" width="2.34" height="2.29" fill="#c8ccb0"/><rect x="209.11" y="280.20" width="2.34" height="2.29" fill="#e0e4d0"/><rect x="211.45" y="268.75" width="2.34" height="2.29" fill="#c8ccb0"/><rect x="211.45" y="271.04" width="2.34" height="2.29" fill="#d8dcc0"/><rect x="211.45" y="273.33" width="2.34" height="2.29" fill="#b0b890"/><rect x="211.45" y="275.62" width="2.34" height="2.29" fill="#5a6250"/><rect x="211.45" y="277.91" width="2.34" height="2.29" fill="#e0e4d0"/><rect x="211.45" y="280.20" width="2.34" height="2.29" fill="#6a7058"/><rect x="213.79" y="268.75" width="2.34" height="2.29" fill="#e0e4d0"/><rect x="213.79" y="271.04" width="2.34" height="2.29" fill="#d8dcc0"/><rect x="213.79" y="273.33" width="2.34" height="2.29" fill="#6a7058"/><rect x="213.79" y="275.62" width="2.34" height="2.29" fill="#c8ccb0"/><rect x="213.79" y="277.91" width="2.34" height="2.29" fill="#d8dcc0"/><rect x="213.79" y="280.20" width="2.34" height="2.29" fill="#b0b890"/><rect x="216.13" y="268.75" width="2.34" height="2.29" fill="#6a7058"/><rect x="216.13" y="271.04" width="2.34" height="2.29" fill="#8a9070"/><rect x="216.13" y="273.33" width="2.34" height="2.29" fill="#d8dcc0"/><rect x="216.13" y="275.62" width="2.34" height="2.29" fill="#6a7058"/><rect x="216.13" y="277.91" width="2.34" height="2.29" fill="#d8dcc0"/><rect x="216.13" y="280.20" width="2.34" height="2.29" fill="#d8dcc0"/><rect x="228.20" y="265.70" width="15.60" height="20.10" fill="#000" fill-opacity="0.12"/><rect x="228.50" y="265.50" width="15.00" height="19.50" fill="#fff"/><rect x="230.50" y="268.00" width="5.00" height="0.50" fill="#999"/><rect x="230.50" y="269.20" width="5.00" height="0.50" fill="#999"/><rect x="230.50" y="270.40" width="5.00" height="0.50" fill="#999"/><rect x="255.70" y="265.70" width="15.60" height="20.10" fill="#000" fill-opacity="0.12"/><rect x="256.00" y="265.50" width="15.00" height="19.50" fill="#fff"/><rect x="283.20" y="265.70" width="15.60" height="20.10" fill="#000" fill-opacity="0.12"/><rect x="283.50" y="265.50" width="15.00" height="19.50" fill="#fff"/><rect x="285.50" y="268.00" width="6.00" height="0.50" fill="#6b86c0"/><rect x="285.50" y="269.30" width="6.00" height="0.50" fill="#6b86c0"/><rect x="285.50" y="270.60" width="6.00" height="0.50" fill="#6b86c0"/><rect x="285.50" y="271.90" width="6.00" height="0.50" fill="#6b86c0"/><rect x="286.00" y="274.50" width="8.00" height="0.50" fill="#7a90c8"/><rect x="286.00" y="275.80" width="8.00" height="0.50" fill="#7a90c8"/><rect x="286.00" y="277.10" width="8.00" height="0.50" fill="#7a90c8"/><rect x="286.00" y="278.40" width="8.00" height="0.50" fill="#7a90c8"/><rect x="310.20" y="265.70" width="15.60" height="20.10" fill="#000" fill-opacity="0.12"/><rect x="310.50" y="265.50" width="15.00" height="19.50" fill="#fff"/><rect x="314.00" y="268.50" width="5.00" height="0.50" fill="#99a"/><rect x="314.00" y="269.80" width="5.00" height="0.50" fill="#99a"/><rect x="315.00" y="277.50" width="6.00" height="0.50" fill="#6b80c8"/><rect x="315.00" y="278.80" width="6.00" height="0.50" fill="#6b80c8"/><rect x="146.25" y="287.60" width="17.00" height="1.00" fill="#8a8a8a" fill-opacity="0.5"/><rect x="150.07" y="290.80" width="9.35" height="1.00" fill="#aaa" fill-opacity="0.6"/><rect x="171.75" y="287.60" width="20.00" height="1.00" fill="#8a8a8a" fill-opacity="0.5"/><rect x="202.25" y="287.60" width="13.00" height="1.00" fill="#8a8a8a" fill-opacity="0.5"/><rect x="229.00" y="287.60" width="14.00" height="1.00" fill="#8a8a8a" fill-opacity="0.5"/><rect x="255.50" y="287.60" width="16.00" height="1.00" fill="#8a8a8a" fill-opacity="0.5"/><rect x="285.50" y="287.60" width="11.00" height="1.00" fill="#8a8a8a" fill-opacity="0.5"/><rect x="315.50" y="287.60" width="5.00" height="1.00" fill="#8a8a8a" fill-opacity="0.5"/><rect x="316.62" y="290.80" width="2.75" height="1.00" fill="#aaa" fill-opacity="0.6"/><rect x="144.70" y="299.60" width="19.70" height="15.60" fill="#000" fill-opacity="0.12"/><rect x="145.00" y="299.40" width="19.10" height="15.00" fill="#fff"/><rect x="172.20" y="299.60" width="19.40" height="15.60" fill="#000" fill-opacity="0.12"/><rect x="172.50" y="299.40" width="18.80" height="15.00" fill="#fff"/><rect x="200.95" y="297.70" width="15.60" height="20.10" fill="#000" fill-opacity="0.12"/><rect x="201.25" y="297.50" width="15.00" height="19.50" fill="#fff"/><rect x="228.20" y="297.70" width="15.60" height="20.10" fill="#000" fill-opacity="0.12"/><rect x="228.50" y="297.50" width="15.00" height="19.50" fill="#fff"/><rect x="255.70" y="297.70" width="15.60" height="20.10" fill="#000" fill-opacity="0.12"/><rect x="256.00" y="297.50" width="15.00" height="19.50" fill="#fff"/><rect x="283.20" y="297.70" width="15.60" height="20.10" fill="#000" fill-opacity="0.12"/><rect x="283.50" y="297.50" width="15.00" height="19.50" fill="url(#g3aws)"/><rect x="288.00" y="299.50" width="6.00" height="2.50" fill="#5a7080"/><rect x="310.20" y="297.70" width="15.60" height="20.10" fill="#000" fill-opacity="0.12"/><rect x="310.50" y="297.50" width="15.00" height="19.50" fill="#fff"/><rect x="312.50" y="300.50" width="11.00" height="0.50" fill="#888"/><rect x="312.50" y="301.70" width="11.00" height="0.50" fill="#888"/><rect x="312.50" y="302.90" width="11.00" height="0.50" fill="#888"/><rect x="312.50" y="304.10" width="11.00" height="0.50" fill="#888"/><rect x="312.50" y="305.30" width="11.00" height="0.50" fill="#888"/><rect x="312.50" y="306.50" width="11.00" height="0.50" fill="#888"/><rect x="312.50" y="307.70" width="11.00" height="0.50" fill="#888"/><rect x="312.50" y="308.90" width="11.00" height="0.50" fill="#888"/><rect x="312.50" y="310.10" width="11.00" height="0.50" fill="#888"/><rect x="312.50" y="311.30" width="11.00" height="0.50" fill="#888"/><rect x="312.50" y="312.50" width="11.00" height="0.50" fill="#888"/><rect x="146.75" y="320.10" width="16.00" height="1.00" fill="#8a8a8a" fill-opacity="0.5"/><rect x="174.75" y="320.10" width="14.00" height="1.00" fill="#8a8a8a" fill-opacity="0.5"/><rect x="203.75" y="320.10" width="10.00" height="1.00" fill="#8a8a8a" fill-opacity="0.5"/><rect x="204.75" y="323.30" width="8.00" height="1.00" fill="#aaa" fill-opacity="0.6"/><rect x="234.00" y="320.10" width="4.00" height="1.00" fill="#8a8a8a" fill-opacity="0.5"/><rect x="230.00" y="323.30" width="12.00" height="1.00" fill="#aaa" fill-opacity="0.6"/><rect x="255.50" y="320.10" width="16.00" height="1.00" fill="#8a8a8a" fill-opacity="0.5"/><rect x="281.00" y="320.10" width="20.00" height="1.00" fill="#8a8a8a" fill-opacity="0.5"/><rect x="283.00" y="323.30" width="16.00" height="1.00" fill="#aaa" fill-opacity="0.6"/><rect x="309.00" y="320.10" width="18.00" height="1.00" fill="#8a8a8a" fill-opacity="0.5"/><rect x="310.80" y="323.30" width="14.40" height="1.00" fill="#aaa" fill-opacity="0.6"/><rect x="146.95" y="332.20" width="15.60" height="20.10" fill="#000" fill-opacity="0.12"/><rect x="147.25" y="332.00" width="15.00" height="19.50" fill="#fff"/><rect x="149.75" y="337.00" width="10.00" height="0.50" fill="#888"/><rect x="149.75" y="338.30" width="10.00" height="0.50" fill="#888"/><rect x="149.75" y="339.60" width="10.00" height="0.50" fill="#888"/><rect x="149.75" y="340.90" width="10.00" height="0.50" fill="#888"/><rect x="149.75" y="342.20" width="10.00" height="0.50" fill="#888"/><rect x="149.75" y="343.50" width="10.00" height="0.50" fill="#888"/><rect x="149.75" y="344.80" width="10.00" height="0.50" fill="#888"/><rect x="149.75" y="346.10" width="10.00" height="0.50" fill="#888"/><rect x="149.75" y="347.40" width="10.00" height="0.50" fill="#888"/><rect x="159.75" y="335.00" width="1.20" height="1.20" fill="#aaa"/><rect x="173.95" y="332.20" width="15.60" height="20.10" fill="#000" fill-opacity="0.12"/><rect x="174.25" y="332.00" width="15.00" height="19.50" fill="#fff"/><rect x="175.75" y="335.00" width="4.00" height="1.50" fill="#c05a6a"/><rect x="175.75" y="337.00" width="12.00" height="0.75" fill="#222"/><rect x="175.75" y="338.30" width="12.00" height="0.75" fill="#222"/><rect x="175.75" y="339.60" width="12.00" height="0.75" fill="#222"/><rect x="175.75" y="340.90" width="12.00" height="0.75" fill="#222"/><rect x="175.75" y="342.20" width="12.00" height="0.75" fill="#222"/><rect x="175.75" y="343.50" width="12.00" height="0.75" fill="#222"/><rect x="175.75" y="344.80" width="12.00" height="0.75" fill="#222"/><rect x="175.75" y="346.10" width="12.00" height="0.75" fill="#222"/><rect x="175.75" y="347.40" width="12.00" height="0.75" fill="#222"/><rect x="175.75" y="348.70" width="12.00" height="0.75" fill="#222"/><rect x="200.95" y="332.20" width="15.60" height="20.10" fill="#000" fill-opacity="0.12"/><rect x="201.25" y="332.00" width="15.00" height="19.50" fill="#fff"/><rect x="204.75" y="333.50" width="8.00" height="0.80" fill="#444"/><rect x="202.75" y="335.50" width="12.00" height="0.80" fill="#1e1e1e"/><rect x="202.75" y="336.80" width="12.00" height="0.80" fill="#1e1e1e"/><rect x="202.75" y="338.10" width="12.00" height="0.80" fill="#1e1e1e"/><rect x="202.75" y="339.40" width="12.00" height="0.80" fill="#1e1e1e"/><rect x="202.75" y="340.70" width="12.00" height="0.80" fill="#1e1e1e"/><rect x="202.75" y="342.00" width="12.00" height="0.80" fill="#1e1e1e"/><rect x="202.75" y="343.30" width="12.00" height="0.80" fill="#1e1e1e"/><rect x="202.75" y="344.60" width="12.00" height="0.80" fill="#1e1e1e"/><rect x="202.75" y="345.90" width="12.00" height="0.80" fill="#1e1e1e"/><rect x="202.75" y="347.20" width="12.00" height="0.80" fill="#1e1e1e"/><rect x="202.75" y="348.50" width="12.00" height="0.80" fill="#1e1e1e"/><rect x="202.75" y="349.80" width="12.00" height="0.80" fill="#1e1e1e"/><rect x="228.20" y="332.20" width="15.60" height="20.10" fill="#000" fill-opacity="0.12"/><rect x="228.50" y="332.00" width="15.00" height="19.50" fill="#fff"/><rect x="232.00" y="333.50" width="8.00" height="0.80" fill="#444"/><rect x="230.00" y="335.50" width="12.00" height="0.80" fill="#1e1e1e"/><rect x="230.00" y="336.80" width="12.00" height="0.80" fill="#1e1e1e"/><rect x="230.00" y="338.10" width="12.00" height="0.80" fill="#1e1e1e"/><rect x="230.00" y="339.40" width="12.00" height="0.80" fill="#1e1e1e"/><rect x="230.00" y="340.70" width="12.00" height="0.80" fill="#1e1e1e"/><rect x="230.00" y="342.00" width="12.00" height="0.80" fill="#1e1e1e"/><rect x="230.00" y="343.30" width="12.00" height="0.80" fill="#1e1e1e"/><rect x="230.00" y="344.60" width="12.00" height="0.80" fill="#1e1e1e"/><rect x="230.00" y="345.90" width="12.00" height="0.80" fill="#1e1e1e"/><rect x="230.00" y="347.20" width="12.00" height="0.80" fill="#1e1e1e"/><rect x="230.00" y="348.50" width="12.00" height="0.80" fill="#1e1e1e"/><rect x="230.00" y="349.80" width="12.00" height="0.80" fill="#1e1e1e"/><rect x="149.75" y="354.30" width="10.00" height="1.00" fill="#8a8a8a" fill-opacity="0.5"/><rect x="151.75" y="357.50" width="6.00" height="1.00" fill="#aaa" fill-opacity="0.6"/><rect x="177.75" y="354.30" width="8.00" height="1.00" fill="#8a8a8a" fill-opacity="0.5"/><rect x="204.75" y="354.30" width="8.00" height="1.00" fill="#8a8a8a" fill-opacity="0.5"/><rect x="232.00" y="354.30" width="8.00" height="1.00" fill="#8a8a8a" fill-opacity="0.5"/></svg></div>
<div class="wst" style="top:127.8px;background:#4f86a6"><svg class="abs" style="left:0;top:0" width="100" height="60.5" viewBox="0 0 100 62" preserveAspectRatio="none"><use href="#wp" width="100" height="62.5"/><rect x="10.40" y="4.30" width="23.30" height="48.90" fill="#000" fill-opacity="0.15"/><rect x="10.60" y="4.30" width="23.00" height="48.60" fill="#f4f4f3"/><rect x="10.60" y="4.30" width="23.00" height="3.00" fill="#e6e6e6"/><rect x="11.10" y="7.50" width="1.00" height="1.00" fill="#7fc040"/><rect x="10.60" y="9.90" width="23.00" height="4.50" fill="#4a86d4"/><rect x="11.10" y="10.30" width="4.00" height="4.00" fill="#555" fill-opacity="0.9"/><rect x="16.50" y="11.90" width="8.00" height="0.60" fill="#dde" fill-opacity="0.7"/><rect x="31.00" y="11.90" width="1.20" height="1.20" fill="#7fc040"/><rect x="11.10" y="15.10" width="4.00" height="4.00" fill="#ddd" fill-opacity="0.9"/><rect x="16.50" y="16.70" width="8.00" height="0.60" fill="#999" fill-opacity="0.7"/><rect x="31.00" y="16.70" width="1.20" height="1.20" fill="#7fc040"/><rect x="11.10" y="19.90" width="4.00" height="4.00" fill="#222" fill-opacity="0.9"/><rect x="16.50" y="21.50" width="8.00" height="0.60" fill="#999" fill-opacity="0.7"/><rect x="31.00" y="21.50" width="1.20" height="1.20" fill="#7fc040"/><rect x="11.10" y="24.70" width="4.00" height="4.00" fill="#b08050" fill-opacity="0.9"/><rect x="16.50" y="26.30" width="8.00" height="0.60" fill="#999" fill-opacity="0.7"/><rect x="31.00" y="26.30" width="1.20" height="1.20" fill="#7fc040"/><rect x="11.10" y="29.50" width="4.00" height="4.00" fill="#a06040" fill-opacity="0.9"/><rect x="16.50" y="31.10" width="8.00" height="0.60" fill="#999" fill-opacity="0.7"/><rect x="31.00" y="31.10" width="1.20" height="1.20" fill="#7fc040"/><rect x="11.10" y="34.30" width="4.00" height="4.00" fill="#904030" fill-opacity="0.9"/><rect x="16.50" y="35.90" width="8.00" height="0.60" fill="#999" fill-opacity="0.7"/><rect x="31.00" y="35.90" width="1.20" height="1.20" fill="#7fc040"/><rect x="40.80" y="10.30" width="45.60" height="39.20" fill="#000" fill-opacity="0.15"/><rect x="41.00" y="10.30" width="45.20" height="39.00" fill="#fbfbfb"/><rect x="41.00" y="10.30" width="45.20" height="4.20" fill="#e9e9e9"/><rect x="41.00" y="14.50" width="45.20" height="0.80" fill="#d8d8d8"/><rect x="42.00" y="16.00" width="1.00" height="1.00" fill="#7fc040"/><rect x="54.50" y="16.00" width="1.00" height="1.00" fill="#7fc040"/><rect x="70.50" y="16.00" width="1.00" height="1.00" fill="#7fc040"/><rect x="42.50" y="44.00" width="12.00" height="0.60" fill="#bbb"/><rect x="46.50" y="45.00" width="1.50" height="1.50" fill="#e8a040"/><rect x="42.50" y="46.50" width="12.00" height="0.60" fill="#bbb"/></svg></div>
<div class="wst" style="top:195px;background:#f3f3f2"><svg class="abs" style="left:0;top:0" width="100" height="60.5" viewBox="0 0 100 62" preserveAspectRatio="none"><rect x="0.00" y="0.00" width="100.00" height="62.00" fill="#f7f7f6"/><rect x="0.00" y="0.00" width="100.00" height="3.00" fill="#ececec"/><rect x="39.50" y="1.00" width="20.00" height="0.60" fill="#bbb"/><rect x="0.00" y="3.00" width="100.00" height="7.50" fill="#dadada"/><rect x="1.50" y="5.50" width="2.50" height="2.00" fill="#aaa" fill-opacity="0.6"/><rect x="5.50" y="5.50" width="2.50" height="2.00" fill="#aaa" fill-opacity="0.6"/><rect x="9.50" y="5.50" width="2.50" height="2.00" fill="#aaa" fill-opacity="0.6"/><rect x="13.50" y="5.50" width="2.50" height="2.00" fill="#aaa" fill-opacity="0.6"/><rect x="17.50" y="5.50" width="2.50" height="2.00" fill="#aaa" fill-opacity="0.6"/><rect x="21.50" y="5.50" width="2.50" height="2.00" fill="#aaa" fill-opacity="0.6"/><rect x="29.10" y="4.00" width="4.40" height="4.40" fill="#6a4a2a"/><rect x="34.50" y="5.00" width="8.00" height="0.60" fill="#888"/><rect x="34.50" y="6.50" width="6.00" height="0.60" fill="#999"/><rect x="72.50" y="5.50" width="24.00" height="1.20" fill="#c8c8c8"/><rect x="0.00" y="10.50" width="100.00" height="0.50" fill="#c0c0c0"/><rect x="0.00" y="11.00" width="13.00" height="51.00" fill="#f3f3f2"/><rect x="13.00" y="11.00" width="0.50" height="51.00" fill="#d0d0d0"/><rect x="1.50" y="14.50" width="1.20" height="1.20" fill="#8fc040"/><rect x="3.50" y="14.80" width="6.00" height="0.50" fill="#aaa"/><rect x="1.50" y="16.60" width="1.20" height="1.20" fill="#8fc040"/><rect x="3.50" y="16.90" width="6.00" height="0.50" fill="#aaa"/><rect x="1.50" y="18.70" width="1.20" height="1.20" fill="#3f7fd0"/><rect x="3.50" y="19.00" width="6.00" height="0.50" fill="#aaa"/><rect x="1.50" y="20.80" width="1.20" height="1.20" fill="#d04040"/><rect x="3.50" y="21.10" width="6.00" height="0.50" fill="#aaa"/><rect x="1.50" y="22.90" width="1.20" height="1.20" fill="#e89040"/><rect x="3.50" y="23.20" width="6.00" height="0.50" fill="#aaa"/><rect x="1.50" y="25.00" width="1.20" height="1.20" fill="#d04040"/><rect x="3.50" y="25.30" width="6.00" height="0.50" fill="#aaa"/><rect x="1.50" y="30.00" width="1.20" height="1.20" fill="#888"/><rect x="3.50" y="30.30" width="6.00" height="0.50" fill="#aaa"/><rect x="1.50" y="32.10" width="1.20" height="1.20" fill="#888"/><rect x="3.50" y="32.40" width="6.00" height="0.50" fill="#aaa"/><rect x="1.50" y="34.20" width="1.20" height="1.20" fill="#888"/><rect x="3.50" y="34.50" width="6.00" height="0.50" fill="#aaa"/><rect x="13.50" y="11.50" width="5.00" height="2.00" fill="#a8a8a8"/><rect x="62.50" y="11.50" width="10.00" height="1.50" fill="#ddd"/><rect x="13.50" y="14.50" width="86.50" height="0.50" fill="#ddd"/><rect x="13.50" y="16.50" width="42.00" height="0.80" fill="#e0e0e0"/><rect x="56.50" y="16.50" width="43.50" height="0.80" fill="#e0e0e0"/><rect x="13.50" y="18.50" width="42.00" height="1.00" fill="#d8d8d8"/><rect x="56.50" y="18.50" width="43.50" height="1.00" fill="#d8d8d8"/><rect x="55.70" y="15.00" width="0.50" height="17.00" fill="#ccc"/><rect x="13.50" y="32.00" width="86.50" height="0.50" fill="#ccc"/><rect x="13.50" y="33.50" width="86.50" height="1.50" fill="#e4e4e4"/><rect x="13.50" y="35.50" width="86.50" height="0.50" fill="#ccc"/></svg></div>
<div class="wst" style="top:262.3px;background:#5fb0b8"><svg class="abs" style="left:0;top:0" width="100" height="60.5" viewBox="0 0 800 500" preserveAspectRatio="none"><use href="#wp" width="800" height="500"/></svg></div>

<div id="tray"><svg class="abs" style="left:0;top:-455px" width="800" height="500" viewBox="0 0 800 500"><defs><radialGradient id="p1face" cx=".45" cy=".55" r=".6"><stop offset="0" stop-color="#dadada"/><stop offset=".7" stop-color="#b0b0b0"/><stop offset="1" stop-color="#707070"/></radialGradient>
<radialGradient id="p2face" cx=".4" cy=".5" r=".6"><stop offset="0" stop-color="#e0b088"/><stop offset=".6" stop-color="#b07850"/><stop offset="1" stop-color="#6a4028"/></radialGradient>
<linearGradient id="p3" x1="0" y1="0" x2="1" y2="1"><stop offset="0" stop-color="#050505"/><stop offset=".45" stop-color="#1a1a1a"/><stop offset=".6" stop-color="#9a9a9a"/><stop offset="1" stop-color="#f0f0f0"/></linearGradient>
<radialGradient id="tcone" cx=".5" cy=".5" r=".5"><stop offset="0" stop-color="#333"/><stop offset=".25" stop-color="#806000"/><stop offset=".45" stop-color="#e8c010"/><stop offset=".8" stop-color="#c09000"/><stop offset="1" stop-color="#555"/></radialGradient>
<linearGradient id="tspk" x1="0" y1="0" x2="0" y2="1"><stop offset="0" stop-color="#fafafa"/><stop offset="1" stop-color="#d8d8d8"/></linearGradient></defs><rect x="587.5" y="462" width="30" height="30" fill="#2e2e2e"/><rect x="589" y="462" width="2" height="16" fill="#555" opacity=".5"/><rect x="593" y="462" width="1.5" height="12" fill="#555" opacity=".4"/><path d="M588 492c1-5 5-8 10-8l5 8z" fill="#a8a8a8"/><ellipse cx="604.5" cy="479" rx="8.5" ry="11" transform="rotate(-15 604.5 479)" fill="url(#p1face)"/><ellipse cx="614.5" cy="481" rx="2.2" ry="3.5" fill="#bdbdbd"/><path d="M596 472c1-6 7-9 13-8 5 1 8 5 8 10-2-3-5-4-8-4-5 0-10 1-13 2z" fill="#161616"/><path d="M600 482c2 2 7 2 9 0" stroke="#666" stroke-width=".8" fill="none"/><rect x="631" y="462" width="30" height="30" fill="#000"/><rect x="631" y="465.5" width="30" height="23" fill="#b89878"/><ellipse cx="646" cy="478" rx="10" ry="11" fill="url(#p2face)"/><path d="M635 474c1-5 8-8 14-7 5 1 9 4 10 9l-3-1c-3-3-8-4-12-3-4 0-7 1-9 2z" fill="#2a1a10"/><path d="M653 470c3 2 6 6 7 12v6h-6z" fill="#3a2a1e" opacity=".85"/><ellipse cx="641" cy="477" rx="2.2" ry="1" fill="#3a2010" opacity=".7"/><ellipse cx="649" cy="476.5" rx="2.2" ry="1" fill="#3a2010" opacity=".7"/><path d="M643 484c2 1 5 1 7-1" stroke="#f0d8c0" stroke-width="1" fill="none"/><rect x="675" y="462" width="30" height="30" fill="#d8d8d8"/><path d="M675 484c4 2 8 5 14 5s10-4 16-10v13h-30z" fill="#c4c4c4"/><path d="M675 462h30v12c-3 1-5 4-8 5-4 1-7 2-10 4-3 1-6 1-8 0-2 1-3 2-4 2z" fill="#040404"/><path d="M690 462h8c1 5 2 9 1 13l-4 3c1-5 0-11-5-16z" fill="#2a2a2a"/><path d="M682 485c3 1 6 1 9 0M694 484c2-1 5-1 7 0" stroke="#333" stroke-width="1" fill="none"/><circle cx="733.5" cy="476.5" r="14" fill="#2f5f8f" fill-opacity=".12"/><g fill="none" stroke="#3f6f9f" stroke-width=".8" opacity=".4"><path d="M721 468a13 13 0 0 0 0 17"/><path d="M746 468a13 13 0 0 1 0 17"/></g><rect x="724" y="463.7" width="19.2" height="26" rx="3.5" fill="url(#tspk)" stroke="#aaa" stroke-width=".4"/><circle cx="733" cy="474.5" r="5" fill="url(#tcone)"/><circle cx="733" cy="474.5" r="1.5" fill="#222"/><path d="M737 482c1 2 1 4 0 6" stroke="#bbb" stroke-width=".5" fill="none"/><rect x="775.7" y="462" width="12.2" height="22" rx="1" fill="#9a6aa8" stroke="#6a3a7a" stroke-width=".4"/><rect x="778" y="465" width="7.5" height="16" fill="#f0e8f0"/><rect x="767" y="468" width="15.2" height="18" rx="1.5" fill="#3a3a3a"/><rect x="768.5" y="470" width="12" height="7" rx="1" fill="#e0c830"/><rect x="768.5" y="478.5" width="12" height="2" fill="#888"/><rect x="768" y="482" width="13" height="2.5" fill="#e8e8e8"/><rect x="768" y="482" width="13" height="1" fill="#d87020"/><rect x="777.6" y="484" width="8.7" height="7" fill="#f0f0f0" stroke="#777" stroke-width=".4"/></svg></div>
</div>
</body></html>
